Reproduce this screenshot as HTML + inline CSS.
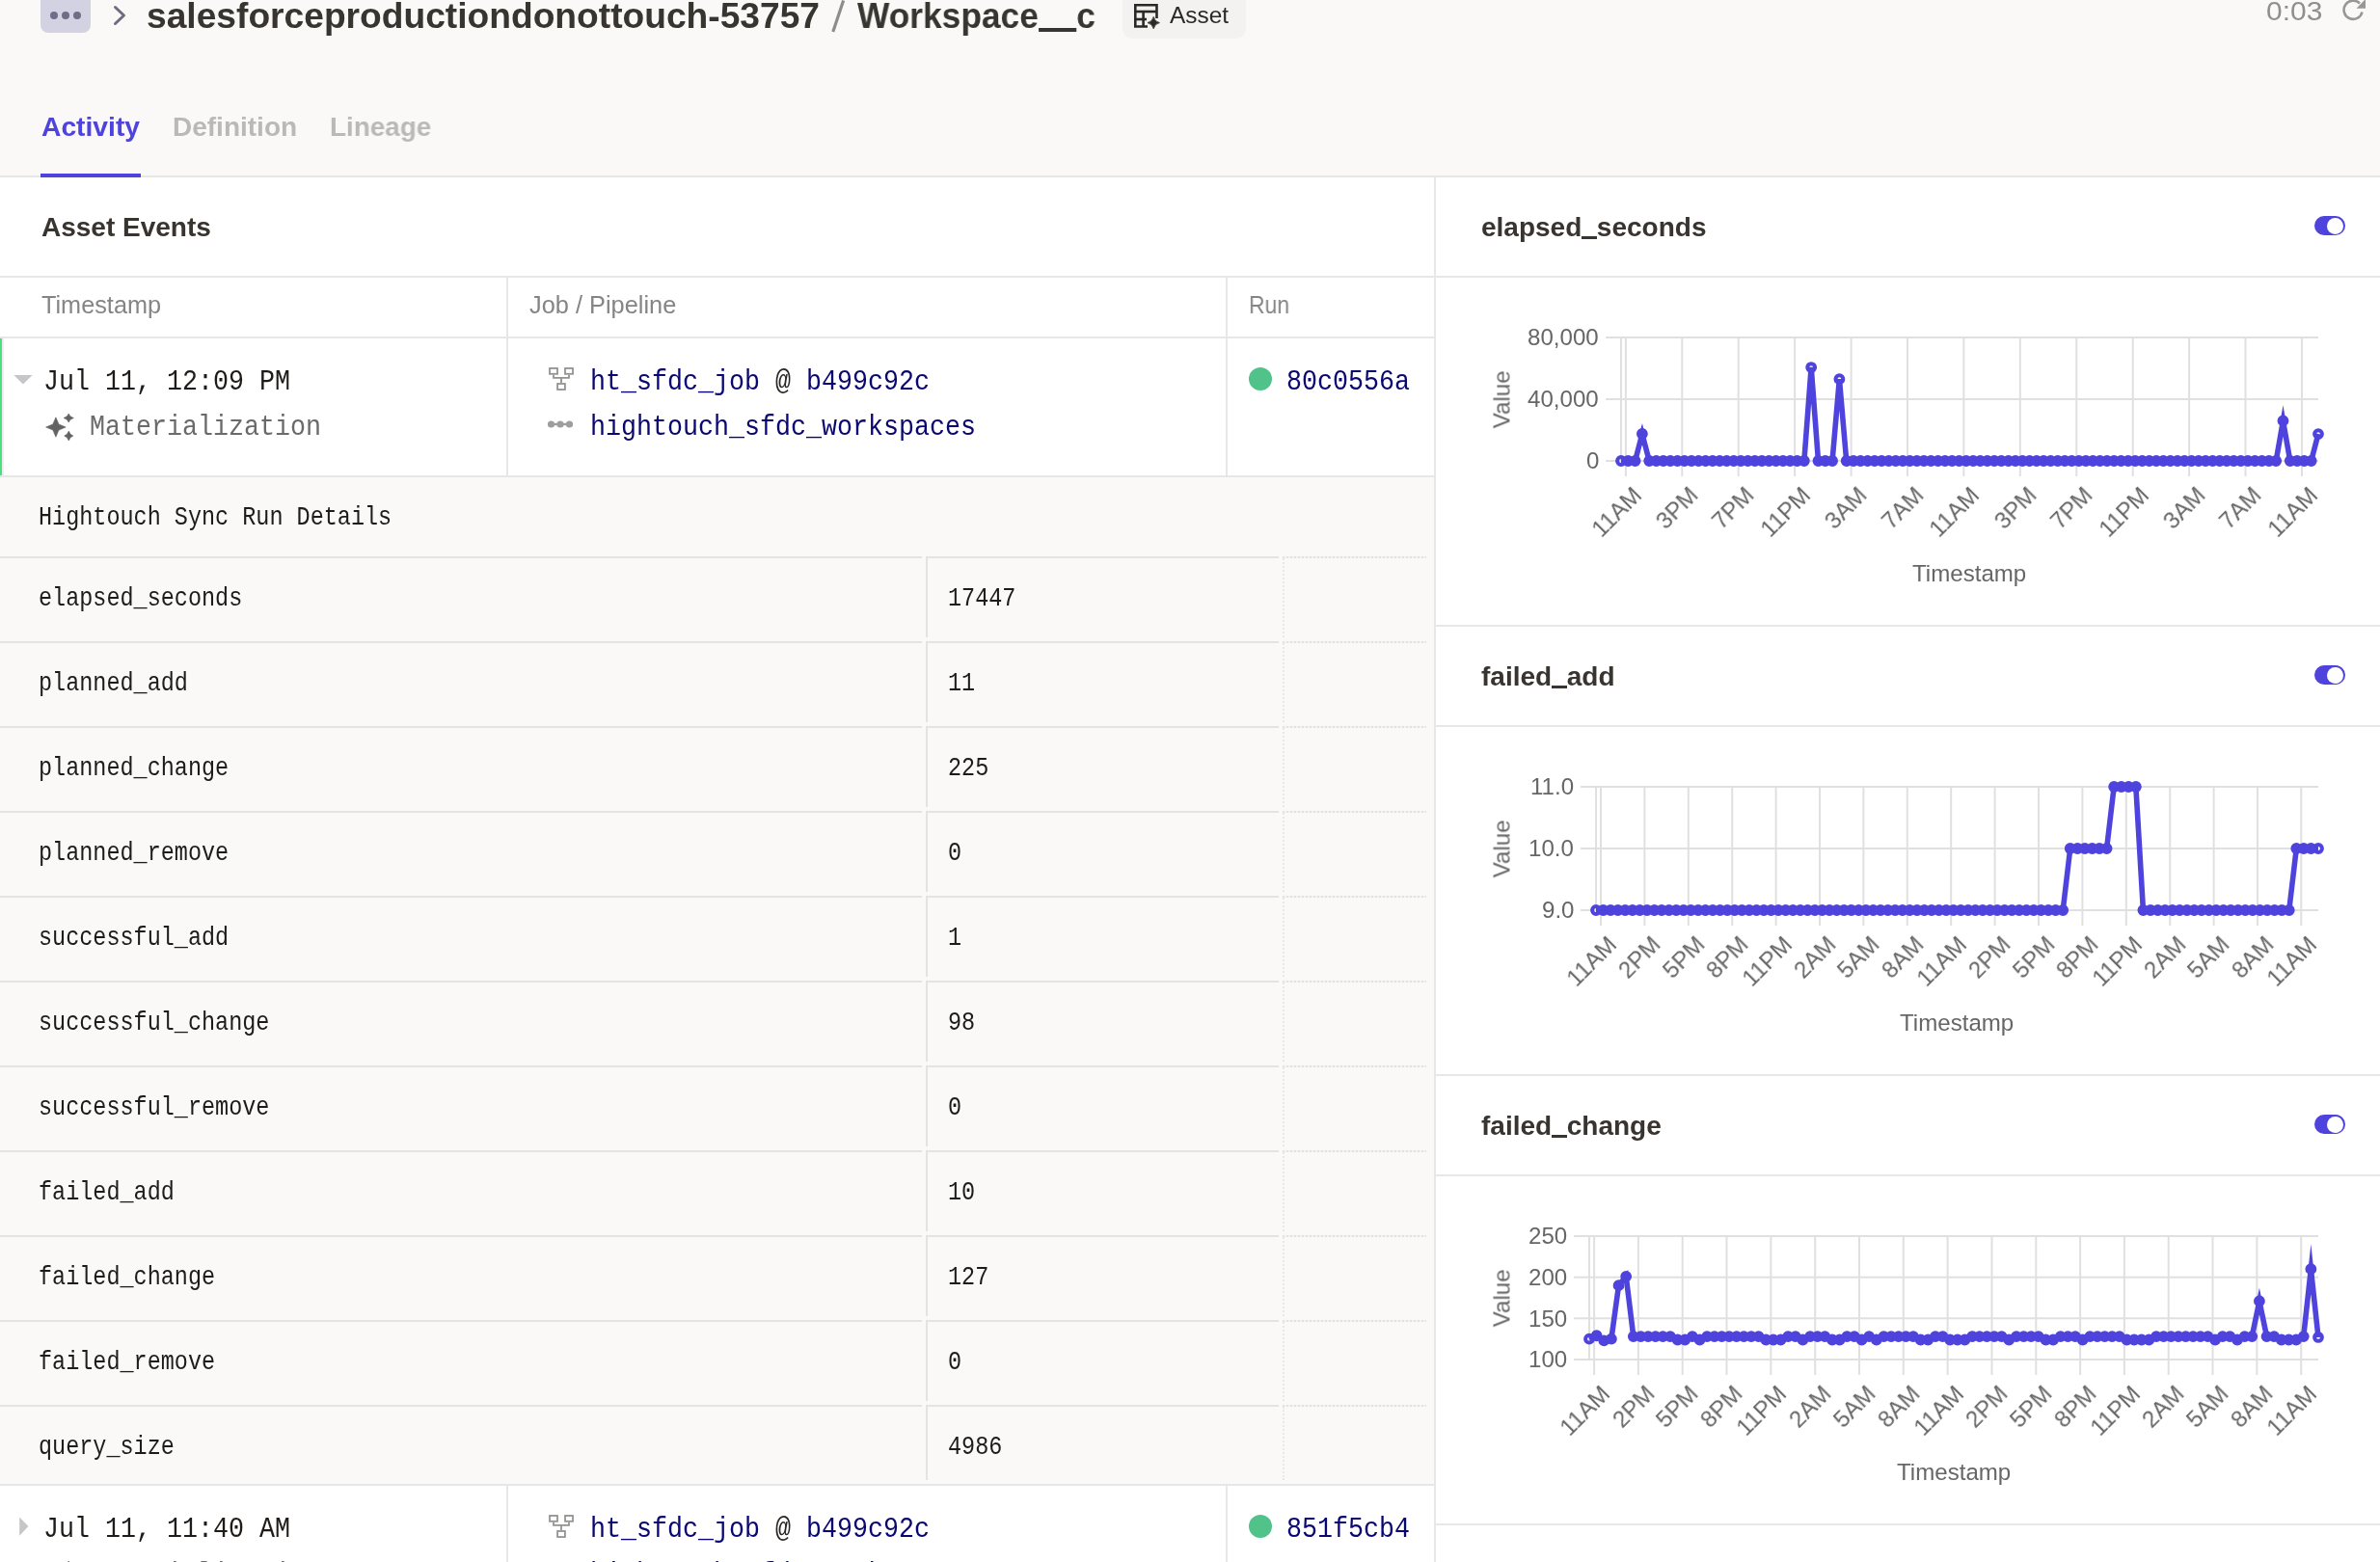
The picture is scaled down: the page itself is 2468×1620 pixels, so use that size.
<!DOCTYPE html><html><head><meta charset="utf-8"><style>
html,body{margin:0;padding:0;width:2468px;height:1620px;overflow:hidden;background:#fff;}
.t{position:absolute;white-space:pre;line-height:1;will-change:transform;}
.r{position:absolute;}
svg{position:absolute;left:0;top:0;}
</style></head><body>
<div class="r" style="left:0px;top:0px;width:2468px;height:182px;background:#FAF9F7;"></div>
<div class="r" style="left:0px;top:182px;width:2468px;height:2px;background:#E7E7E7;"></div>
<div class="r" style="left:42px;top:-8px;width:52px;height:42px;background:#D3D2E3;border-radius:8px;"></div>
<div class="r" style="left:52px;top:12px;width:8px;height:8px;background:#6F6D87;border-radius:50%;"></div>
<div class="r" style="left:64px;top:12px;width:8px;height:8px;background:#6F6D87;border-radius:50%;"></div>
<div class="r" style="left:76px;top:12px;width:8px;height:8px;background:#6F6D87;border-radius:50%;"></div>
<svg width="200" height="40" style="left:0;top:0"><path d="M119.5 7.5 L128.5 16 L119.5 24.5" fill="none" stroke="#6E6C80" stroke-width="3" stroke-linecap="round" stroke-linejoin="round"/></svg>
<div class="t" style="left:151.60px;top:-2.13px;font-family:'Liberation Sans', sans-serif;font-size:37px;font-weight:700;color:#38342F;transform:scale(1.0045,1.0000);transform-origin:0.00px 31.33px;">salesforceproductiondonottouch-53757</div>
<svg width="900" height="40" style="left:0;top:0"><path d="M874.6 0.5 L863.8 33" stroke="#8F8D8A" stroke-width="3.2" stroke-linecap="butt"/></svg>
<div class="t" style="left:889.20px;top:-2.13px;font-family:'Liberation Sans', sans-serif;font-size:37px;font-weight:700;color:#38342F;transform:scale(0.9547,1.0000);transform-origin:0.00px 31.33px;">Workspace<span style="position:relative;color:transparent">__<i style="position:absolute;left:0;right:0;top:33.48px;height:3.80px;background:currentColor;background:#38342F"></i></span>c</div>
<div class="r" style="left:1164px;top:-10px;width:128px;height:49.5px;background:#F3F2F0;border-radius:10px;"></div>
<svg width="1300" height="40" style="left:0;top:0">
<g fill="none" stroke="#2C2925" stroke-width="2.6">
<path d="M1199.5 19 V5.3 H1177.3 V27.5 H1190"/>
<path d="M1177.3 12 H1199.5"/><path d="M1177.3 20 H1189"/><path d="M1185.6 12 V27.5"/>
</g>
<path d="M1196.2 17.4 Q1197.3 22.5 1202.4 23.6 Q1197.3 24.7 1196.2 29.8 Q1195.1 24.7 1190 23.6 Q1195.1 22.5 1196.2 17.4 Z" fill="#2C2925" stroke="#2C2925" stroke-width="0.8"/>
</svg>
<div class="t" style="left:1213.00px;top:3.68px;font-family:'Liberation Sans', sans-serif;font-size:24px;font-weight:400;color:#2C2925;transform:scale(1.0167,1.0000);transform-origin:0.00px 20.32px;">Asset</div>
<div class="t" style="left:2349.70px;top:-2.01px;font-family:'Liberation Sans', sans-serif;font-size:28px;font-weight:400;color:#8F8F8F;transform:scale(1.0697,1.0000);transform-origin:0.00px 23.71px;">0:03</div>
<svg width="2468" height="40" style="left:0;top:0">
<path d="M2449.5 12.5 A9.6 9.6 0 1 1 2447 3.5" fill="none" stroke="#979797" stroke-width="2.6"/>
<path d="M2453 -1 V8.8 H2443.5 Z" fill="#979797"/>
</svg>
<div class="t" style="left:42.90px;top:118.49px;font-family:'Liberation Sans', sans-serif;font-size:28px;font-weight:700;color:#4F43DD;transform:scale(1.0084,1.0000);transform-origin:0.00px 23.71px;">Activity</div>
<div class="t" style="left:179.40px;top:118.49px;font-family:'Liberation Sans', sans-serif;font-size:28px;font-weight:700;color:#B9B9B9;transform:scale(0.9969,1.0000);transform-origin:0.00px 23.71px;">Definition</div>
<div class="t" style="left:342.40px;top:118.49px;font-family:'Liberation Sans', sans-serif;font-size:28px;font-weight:700;color:#B9B9B9;transform:scale(0.9939,1.0000);transform-origin:0.00px 23.71px;">Lineage</div>
<div class="r" style="left:42px;top:180px;width:104px;height:4px;background:#4F43DD;"></div>
<div class="r" style="left:1487px;top:184px;width:2px;height:1436px;background:#E7E7E7;"></div>
<div class="t" style="left:43.00px;top:222.19px;font-family:'Liberation Sans', sans-serif;font-size:28px;font-weight:700;color:#38342F;transform:scale(0.9972,1.0000);transform-origin:0.00px 23.71px;">Asset Events</div>
<div class="r" style="left:0px;top:286px;width:1487px;height:2px;background:#E7E7E7;"></div>
<div class="t" style="left:42.90px;top:303.53px;font-family:'Liberation Sans', sans-serif;font-size:25px;font-weight:400;color:#858585;transform:scale(1.0110,1.0000);transform-origin:0.00px 21.17px;">Timestamp</div>
<div class="t" style="left:548.80px;top:303.53px;font-family:'Liberation Sans', sans-serif;font-size:25px;font-weight:400;color:#858585;transform:scale(1.0147,1.0000);transform-origin:0.00px 21.17px;">Job / Pipeline</div>
<div class="t" style="left:1295.00px;top:303.53px;font-family:'Liberation Sans', sans-serif;font-size:25px;font-weight:400;color:#858585;transform:scale(0.9180,1.0000);transform-origin:0.00px 21.17px;">Run</div>
<div class="r" style="left:525px;top:288px;width:2px;height:61px;background:#E7E7E7;"></div>
<div class="r" style="left:1271px;top:288px;width:2px;height:61px;background:#E7E7E7;"></div>
<div class="r" style="left:0px;top:349px;width:1487px;height:2px;background:#E7E7E7;"></div>
<div class="r" style="left:0px;top:351px;width:2px;height:142px;background:#4ADE80;"></div>
<div class="r" style="left:2px;top:351px;width:1.5px;height:142px;background:#EDEDED;"></div>
<div class="r" style="left:525px;top:351px;width:2px;height:142px;background:#E7E7E7;"></div>
<div class="r" style="left:1271px;top:351px;width:2px;height:142px;background:#E7E7E7;"></div>
<svg width="60" height="60" style="left:0;top:351px"><path d="M14.3 38.0 H33.6 L24 47.6 Z" fill="#C6C6C8"/></svg>
<div class="t" style="left:44.90px;top:383.87px;font-family:'Liberation Mono', monospace;font-size:26.67px;font-weight:400;color:#1E1B18;transform:scale(1.0000,1.1200);transform-origin:0.00px 20.43px;">Jul 11, 12:09 PM</div>
<svg width="70" height="455" style="left:0;top:0"><path d="M57.90 432.80 L60.96 439.94 L68.20 443.00 L60.96 446.06 L57.90 453.20 L54.84 446.06 L47.60 443.00 L54.84 439.94 Z" fill="#636363" stroke="#636363" stroke-width="0.6" stroke-linejoin="round"/></svg>
<svg width="78" height="440" style="left:0;top:0"><path d="M71.20 429.00 L72.91 431.79 L76.30 433.50 L72.91 435.21 L71.20 438.00 L69.49 435.21 L66.10 433.50 L69.49 431.79 Z" fill="#636363" stroke="#636363" stroke-width="0.6" stroke-linejoin="round"/></svg>
<svg width="77" height="459" style="left:0;top:0"><path d="M71.30 447.10 L73.05 450.35 L75.90 452.10 L73.05 453.85 L71.30 457.10 L69.55 453.85 L66.70 452.10 L69.55 450.35 Z" fill="#636363" stroke="#636363" stroke-width="0.6" stroke-linejoin="round"/></svg>
<div class="t" style="left:92.50px;top:430.87px;font-family:'Liberation Mono', monospace;font-size:26.67px;font-weight:400;color:#6A6A6A;transform:scale(1.0000,1.1200);transform-origin:0.00px 20.43px;">Materialization</div>
<svg width="40" height="40" style="left:560px;top:381px"><g fill="none" stroke="#939391" stroke-width="1.8">
<rect x="10" y="1" width="8" height="5.8"/><rect x="26" y="1" width="8" height="5.8"/><rect x="18.1" y="17" width="7.8" height="6"/>
<path d="M14 7.7 V10.9 H30 V7.7 M22 10.9 V16.1"/></g></svg>
<div class="t" style="left:611.50px;top:383.87px;font-family:'Liberation Mono', monospace;font-size:26.67px;font-weight:400;color:#0A0870;transform:scale(1.0000,1.1200);transform-origin:0.00px 20.43px;">ht_sfdc_job <span style="color:#2A2724">@</span> b499c92c</div>
<svg width="40" height="20" style="left:560px;top:430px"><g fill="#9E9E9E">
<circle cx="11.5" cy="10" r="3.6"/><circle cx="21" cy="10" r="3.6"/><circle cx="30.5" cy="10" r="3.6"/><rect x="11.5" y="8.8" width="19" height="2.4"/></g></svg>
<div class="t" style="left:611.50px;top:430.87px;font-family:'Liberation Mono', monospace;font-size:26.67px;font-weight:400;color:#0A0870;transform:scale(1.0000,1.1200);transform-origin:0.00px 20.43px;">hightouch_sfdc_workspaces</div>
<div class="r" style="left:1295px;top:381px;width:24px;height:24px;background:#50C28A;border-radius:50%;"></div>
<div class="t" style="left:1334.20px;top:383.87px;font-family:'Liberation Mono', monospace;font-size:26.67px;font-weight:400;color:#0A0870;transform:scale(1.0000,1.1200);transform-origin:0.00px 20.43px;">80c0556a</div>
<div class="r" style="left:0px;top:493px;width:1487px;height:2px;background:#E7E7E7;"></div>
<div class="r" style="left:0px;top:495px;width:1487px;height:1044px;background:#FAF9F7;"></div>
<div class="t" style="left:40.10px;top:526.02px;font-family:'Liberation Mono', monospace;font-size:23.47px;font-weight:400;color:#1E1B18;transform:scale(1.0000,1.1500);transform-origin:0.00px 17.98px;">Hightouch Sync Run Details</div>
<div class="r" style="left:0px;top:577px;width:956px;height:2px;background:#E4E3E1;"></div>
<div class="r" style="left:960px;top:577px;width:366px;height:2px;background:#E4E3E1;"></div>
<div class="r" style="left:960px;top:579px;width:2px;height:82px;background:#E4E3E1;"></div>
<div class="r" style="left:1330px;top:577px;width:149px;height:2px;background:repeating-linear-gradient(90deg,#E2E1DF 0 2px,#F3F2F0 2px 4px);"></div>
<div class="r" style="left:1330px;top:579px;width:0px;height:82px;background:transparent;border-left:2px dotted #E9E8E6;width:0;"></div>
<div class="t" style="left:40.10px;top:610.02px;font-family:'Liberation Mono', monospace;font-size:23.47px;font-weight:400;color:#1E1B18;transform:scale(1.0000,1.1500);transform-origin:0.00px 17.98px;">elapsed_seconds</div>
<div class="t" style="left:982.50px;top:610.02px;font-family:'Liberation Mono', monospace;font-size:23.47px;font-weight:400;color:#1E1B18;transform:scale(1.0000,1.1500);transform-origin:0.00px 17.98px;">17447</div>
<div class="r" style="left:0px;top:665px;width:956px;height:2px;background:#E4E3E1;"></div>
<div class="r" style="left:960px;top:665px;width:366px;height:2px;background:#E4E3E1;"></div>
<div class="r" style="left:960px;top:667px;width:2px;height:82px;background:#E4E3E1;"></div>
<div class="r" style="left:1330px;top:665px;width:149px;height:2px;background:repeating-linear-gradient(90deg,#E2E1DF 0 2px,#F3F2F0 2px 4px);"></div>
<div class="r" style="left:1330px;top:667px;width:0px;height:82px;background:transparent;border-left:2px dotted #E9E8E6;width:0;"></div>
<div class="t" style="left:40.10px;top:698.02px;font-family:'Liberation Mono', monospace;font-size:23.47px;font-weight:400;color:#1E1B18;transform:scale(1.0000,1.1500);transform-origin:0.00px 17.98px;">planned_add</div>
<div class="t" style="left:982.50px;top:698.02px;font-family:'Liberation Mono', monospace;font-size:23.47px;font-weight:400;color:#1E1B18;transform:scale(1.0000,1.1500);transform-origin:0.00px 17.98px;">11</div>
<div class="r" style="left:0px;top:753px;width:956px;height:2px;background:#E4E3E1;"></div>
<div class="r" style="left:960px;top:753px;width:366px;height:2px;background:#E4E3E1;"></div>
<div class="r" style="left:960px;top:755px;width:2px;height:82px;background:#E4E3E1;"></div>
<div class="r" style="left:1330px;top:753px;width:149px;height:2px;background:repeating-linear-gradient(90deg,#E2E1DF 0 2px,#F3F2F0 2px 4px);"></div>
<div class="r" style="left:1330px;top:755px;width:0px;height:82px;background:transparent;border-left:2px dotted #E9E8E6;width:0;"></div>
<div class="t" style="left:40.10px;top:786.02px;font-family:'Liberation Mono', monospace;font-size:23.47px;font-weight:400;color:#1E1B18;transform:scale(1.0000,1.1500);transform-origin:0.00px 17.98px;">planned_change</div>
<div class="t" style="left:982.50px;top:786.02px;font-family:'Liberation Mono', monospace;font-size:23.47px;font-weight:400;color:#1E1B18;transform:scale(1.0000,1.1500);transform-origin:0.00px 17.98px;">225</div>
<div class="r" style="left:0px;top:841px;width:956px;height:2px;background:#E4E3E1;"></div>
<div class="r" style="left:960px;top:841px;width:366px;height:2px;background:#E4E3E1;"></div>
<div class="r" style="left:960px;top:843px;width:2px;height:82px;background:#E4E3E1;"></div>
<div class="r" style="left:1330px;top:841px;width:149px;height:2px;background:repeating-linear-gradient(90deg,#E2E1DF 0 2px,#F3F2F0 2px 4px);"></div>
<div class="r" style="left:1330px;top:843px;width:0px;height:82px;background:transparent;border-left:2px dotted #E9E8E6;width:0;"></div>
<div class="t" style="left:40.10px;top:874.02px;font-family:'Liberation Mono', monospace;font-size:23.47px;font-weight:400;color:#1E1B18;transform:scale(1.0000,1.1500);transform-origin:0.00px 17.98px;">planned_remove</div>
<div class="t" style="left:982.50px;top:874.02px;font-family:'Liberation Mono', monospace;font-size:23.47px;font-weight:400;color:#1E1B18;transform:scale(1.0000,1.1500);transform-origin:0.00px 17.98px;">0</div>
<div class="r" style="left:0px;top:929px;width:956px;height:2px;background:#E4E3E1;"></div>
<div class="r" style="left:960px;top:929px;width:366px;height:2px;background:#E4E3E1;"></div>
<div class="r" style="left:960px;top:931px;width:2px;height:82px;background:#E4E3E1;"></div>
<div class="r" style="left:1330px;top:929px;width:149px;height:2px;background:repeating-linear-gradient(90deg,#E2E1DF 0 2px,#F3F2F0 2px 4px);"></div>
<div class="r" style="left:1330px;top:931px;width:0px;height:82px;background:transparent;border-left:2px dotted #E9E8E6;width:0;"></div>
<div class="t" style="left:40.10px;top:962.02px;font-family:'Liberation Mono', monospace;font-size:23.47px;font-weight:400;color:#1E1B18;transform:scale(1.0000,1.1500);transform-origin:0.00px 17.98px;">successful_add</div>
<div class="t" style="left:982.50px;top:962.02px;font-family:'Liberation Mono', monospace;font-size:23.47px;font-weight:400;color:#1E1B18;transform:scale(1.0000,1.1500);transform-origin:0.00px 17.98px;">1</div>
<div class="r" style="left:0px;top:1017px;width:956px;height:2px;background:#E4E3E1;"></div>
<div class="r" style="left:960px;top:1017px;width:366px;height:2px;background:#E4E3E1;"></div>
<div class="r" style="left:960px;top:1019px;width:2px;height:82px;background:#E4E3E1;"></div>
<div class="r" style="left:1330px;top:1017px;width:149px;height:2px;background:repeating-linear-gradient(90deg,#E2E1DF 0 2px,#F3F2F0 2px 4px);"></div>
<div class="r" style="left:1330px;top:1019px;width:0px;height:82px;background:transparent;border-left:2px dotted #E9E8E6;width:0;"></div>
<div class="t" style="left:40.10px;top:1050.02px;font-family:'Liberation Mono', monospace;font-size:23.47px;font-weight:400;color:#1E1B18;transform:scale(1.0000,1.1500);transform-origin:0.00px 17.98px;">successful_change</div>
<div class="t" style="left:982.50px;top:1050.02px;font-family:'Liberation Mono', monospace;font-size:23.47px;font-weight:400;color:#1E1B18;transform:scale(1.0000,1.1500);transform-origin:0.00px 17.98px;">98</div>
<div class="r" style="left:0px;top:1105px;width:956px;height:2px;background:#E4E3E1;"></div>
<div class="r" style="left:960px;top:1105px;width:366px;height:2px;background:#E4E3E1;"></div>
<div class="r" style="left:960px;top:1107px;width:2px;height:82px;background:#E4E3E1;"></div>
<div class="r" style="left:1330px;top:1105px;width:149px;height:2px;background:repeating-linear-gradient(90deg,#E2E1DF 0 2px,#F3F2F0 2px 4px);"></div>
<div class="r" style="left:1330px;top:1107px;width:0px;height:82px;background:transparent;border-left:2px dotted #E9E8E6;width:0;"></div>
<div class="t" style="left:40.10px;top:1138.02px;font-family:'Liberation Mono', monospace;font-size:23.47px;font-weight:400;color:#1E1B18;transform:scale(1.0000,1.1500);transform-origin:0.00px 17.98px;">successful_remove</div>
<div class="t" style="left:982.50px;top:1138.02px;font-family:'Liberation Mono', monospace;font-size:23.47px;font-weight:400;color:#1E1B18;transform:scale(1.0000,1.1500);transform-origin:0.00px 17.98px;">0</div>
<div class="r" style="left:0px;top:1193px;width:956px;height:2px;background:#E4E3E1;"></div>
<div class="r" style="left:960px;top:1193px;width:366px;height:2px;background:#E4E3E1;"></div>
<div class="r" style="left:960px;top:1195px;width:2px;height:82px;background:#E4E3E1;"></div>
<div class="r" style="left:1330px;top:1193px;width:149px;height:2px;background:repeating-linear-gradient(90deg,#E2E1DF 0 2px,#F3F2F0 2px 4px);"></div>
<div class="r" style="left:1330px;top:1195px;width:0px;height:82px;background:transparent;border-left:2px dotted #E9E8E6;width:0;"></div>
<div class="t" style="left:40.10px;top:1226.02px;font-family:'Liberation Mono', monospace;font-size:23.47px;font-weight:400;color:#1E1B18;transform:scale(1.0000,1.1500);transform-origin:0.00px 17.98px;">failed_add</div>
<div class="t" style="left:982.50px;top:1226.02px;font-family:'Liberation Mono', monospace;font-size:23.47px;font-weight:400;color:#1E1B18;transform:scale(1.0000,1.1500);transform-origin:0.00px 17.98px;">10</div>
<div class="r" style="left:0px;top:1281px;width:956px;height:2px;background:#E4E3E1;"></div>
<div class="r" style="left:960px;top:1281px;width:366px;height:2px;background:#E4E3E1;"></div>
<div class="r" style="left:960px;top:1283px;width:2px;height:82px;background:#E4E3E1;"></div>
<div class="r" style="left:1330px;top:1281px;width:149px;height:2px;background:repeating-linear-gradient(90deg,#E2E1DF 0 2px,#F3F2F0 2px 4px);"></div>
<div class="r" style="left:1330px;top:1283px;width:0px;height:82px;background:transparent;border-left:2px dotted #E9E8E6;width:0;"></div>
<div class="t" style="left:40.10px;top:1314.02px;font-family:'Liberation Mono', monospace;font-size:23.47px;font-weight:400;color:#1E1B18;transform:scale(1.0000,1.1500);transform-origin:0.00px 17.98px;">failed_change</div>
<div class="t" style="left:982.50px;top:1314.02px;font-family:'Liberation Mono', monospace;font-size:23.47px;font-weight:400;color:#1E1B18;transform:scale(1.0000,1.1500);transform-origin:0.00px 17.98px;">127</div>
<div class="r" style="left:0px;top:1369px;width:956px;height:2px;background:#E4E3E1;"></div>
<div class="r" style="left:960px;top:1369px;width:366px;height:2px;background:#E4E3E1;"></div>
<div class="r" style="left:960px;top:1371px;width:2px;height:82px;background:#E4E3E1;"></div>
<div class="r" style="left:1330px;top:1369px;width:149px;height:2px;background:repeating-linear-gradient(90deg,#E2E1DF 0 2px,#F3F2F0 2px 4px);"></div>
<div class="r" style="left:1330px;top:1371px;width:0px;height:82px;background:transparent;border-left:2px dotted #E9E8E6;width:0;"></div>
<div class="t" style="left:40.10px;top:1402.02px;font-family:'Liberation Mono', monospace;font-size:23.47px;font-weight:400;color:#1E1B18;transform:scale(1.0000,1.1500);transform-origin:0.00px 17.98px;">failed_remove</div>
<div class="t" style="left:982.50px;top:1402.02px;font-family:'Liberation Mono', monospace;font-size:23.47px;font-weight:400;color:#1E1B18;transform:scale(1.0000,1.1500);transform-origin:0.00px 17.98px;">0</div>
<div class="r" style="left:0px;top:1457px;width:956px;height:2px;background:#E4E3E1;"></div>
<div class="r" style="left:960px;top:1457px;width:366px;height:2px;background:#E4E3E1;"></div>
<div class="r" style="left:960px;top:1459px;width:2px;height:76px;background:#E4E3E1;"></div>
<div class="r" style="left:1330px;top:1457px;width:149px;height:2px;background:repeating-linear-gradient(90deg,#E2E1DF 0 2px,#F3F2F0 2px 4px);"></div>
<div class="r" style="left:1330px;top:1459px;width:0px;height:76px;background:transparent;border-left:2px dotted #E9E8E6;width:0;"></div>
<div class="t" style="left:40.10px;top:1490.02px;font-family:'Liberation Mono', monospace;font-size:23.47px;font-weight:400;color:#1E1B18;transform:scale(1.0000,1.1500);transform-origin:0.00px 17.98px;">query_size</div>
<div class="t" style="left:982.50px;top:1490.02px;font-family:'Liberation Mono', monospace;font-size:23.47px;font-weight:400;color:#1E1B18;transform:scale(1.0000,1.1500);transform-origin:0.00px 17.98px;">4986</div>
<div class="r" style="left:0px;top:1539px;width:1487px;height:2px;background:#E7E7E7;"></div>
<div class="r" style="left:525px;top:1541px;width:2px;height:80px;background:#E7E7E7;"></div>
<div class="r" style="left:1271px;top:1541px;width:2px;height:80px;background:#E7E7E7;"></div>
<svg width="60" height="60" style="left:0;top:1541px"><path d="M20.2 32.5 V51.7 L29.4 42.1 Z" fill="#C6C6C8"/></svg>
<div class="t" style="left:44.90px;top:1573.87px;font-family:'Liberation Mono', monospace;font-size:26.67px;font-weight:400;color:#1E1B18;transform:scale(1.0000,1.1200);transform-origin:0.00px 20.43px;">Jul 11, 11:40 AM</div>
<svg width="70" height="1645" style="left:0;top:0"><path d="M57.90 1622.80 L60.96 1629.94 L68.20 1633.00 L60.96 1636.06 L57.90 1643.20 L54.84 1636.06 L47.60 1633.00 L54.84 1629.94 Z" fill="#636363" stroke="#636363" stroke-width="0.6" stroke-linejoin="round"/></svg>
<svg width="78" height="1630" style="left:0;top:0"><path d="M71.20 1619.00 L72.91 1621.79 L76.30 1623.50 L72.91 1625.21 L71.20 1628.00 L69.49 1625.21 L66.10 1623.50 L69.49 1621.79 Z" fill="#636363" stroke="#636363" stroke-width="0.6" stroke-linejoin="round"/></svg>
<svg width="77" height="1649" style="left:0;top:0"><path d="M71.30 1637.10 L73.05 1640.35 L75.90 1642.10 L73.05 1643.85 L71.30 1647.10 L69.55 1643.85 L66.70 1642.10 L69.55 1640.35 Z" fill="#636363" stroke="#636363" stroke-width="0.6" stroke-linejoin="round"/></svg>
<div class="t" style="left:92.50px;top:1620.87px;font-family:'Liberation Mono', monospace;font-size:26.67px;font-weight:400;color:#6A6A6A;transform:scale(1.0000,1.1200);transform-origin:0.00px 20.43px;">Materialization</div>
<svg width="40" height="40" style="left:560px;top:1571px"><g fill="none" stroke="#939391" stroke-width="1.8">
<rect x="10" y="1" width="8" height="5.8"/><rect x="26" y="1" width="8" height="5.8"/><rect x="18.1" y="17" width="7.8" height="6"/>
<path d="M14 7.7 V10.9 H30 V7.7 M22 10.9 V16.1"/></g></svg>
<div class="t" style="left:611.50px;top:1573.87px;font-family:'Liberation Mono', monospace;font-size:26.67px;font-weight:400;color:#0A0870;transform:scale(1.0000,1.1200);transform-origin:0.00px 20.43px;">ht_sfdc_job <span style="color:#2A2724">@</span> b499c92c</div>
<svg width="40" height="20" style="left:560px;top:1620px"><g fill="#9E9E9E">
<circle cx="11.5" cy="10" r="3.6"/><circle cx="21" cy="10" r="3.6"/><circle cx="30.5" cy="10" r="3.6"/><rect x="11.5" y="8.8" width="19" height="2.4"/></g></svg>
<div class="t" style="left:611.50px;top:1620.87px;font-family:'Liberation Mono', monospace;font-size:26.67px;font-weight:400;color:#0A0870;transform:scale(1.0000,1.1200);transform-origin:0.00px 20.43px;">hightouch_sfdc_workspaces</div>
<div class="r" style="left:1295px;top:1571px;width:24px;height:24px;background:#50C28A;border-radius:50%;"></div>
<div class="t" style="left:1334.20px;top:1573.87px;font-family:'Liberation Mono', monospace;font-size:26.67px;font-weight:400;color:#0A0870;transform:scale(1.0000,1.1200);transform-origin:0.00px 20.43px;">851f5cb4</div>
<div class="t" style="left:1535.80px;top:222.39px;font-family:'Liberation Sans', sans-serif;font-size:28px;font-weight:700;color:#38342F;">elapsed<span style="position:relative;color:transparent">_<i style="position:absolute;left:0;right:0;top:24.94px;height:3.30px;background:currentColor;background:#38342F"></i></span>seconds</div>
<div class="r" style="left:2400px;top:224px;width:32px;height:20px;background:#4F43DD;border-radius:10px;"></div>
<div class="r" style="left:2413.2px;top:225.6px;width:17px;height:17px;background:#fff;border-radius:50%;"></div>
<div class="r" style="left:1489px;top:286px;width:979px;height:2px;background:#E7E7E7;"></div>
<div class="r" style="left:1489px;top:648px;width:979px;height:2px;background:#E7E7E7;"></div>
<svg width="2468" height="1620" style="left:0;top:0">
<rect x="1665.0" y="477.0" width="739.0" height="2" fill="#E0E0E0"/>
<rect x="1665.0" y="413.0" width="739.0" height="2" fill="#E0E0E0"/>
<rect x="1665.0" y="349.0" width="739.0" height="2" fill="#E0E0E0"/>
<rect x="1680.0" y="350.0" width="2" height="128.0" fill="#E0E0E0"/>
<rect x="1684.9" y="350.0" width="2" height="144.0" fill="#E0E0E0"/>
<rect x="1743.3" y="350.0" width="2" height="144.0" fill="#E0E0E0"/>
<rect x="1801.7" y="350.0" width="2" height="144.0" fill="#E0E0E0"/>
<rect x="1860.1" y="350.0" width="2" height="144.0" fill="#E0E0E0"/>
<rect x="1918.6" y="350.0" width="2" height="144.0" fill="#E0E0E0"/>
<rect x="1977.0" y="350.0" width="2" height="144.0" fill="#E0E0E0"/>
<rect x="2035.4" y="350.0" width="2" height="144.0" fill="#E0E0E0"/>
<rect x="2093.8" y="350.0" width="2" height="144.0" fill="#E0E0E0"/>
<rect x="2152.3" y="350.0" width="2" height="144.0" fill="#E0E0E0"/>
<rect x="2210.7" y="350.0" width="2" height="144.0" fill="#E0E0E0"/>
<rect x="2269.1" y="350.0" width="2" height="144.0" fill="#E0E0E0"/>
<rect x="2327.5" y="350.0" width="2" height="144.0" fill="#E0E0E0"/>
<rect x="2386.0" y="350.0" width="2" height="144.0" fill="#E0E0E0"/>
</svg>
<div class="t" style="left:1644.50px;top:466.39px;font-family:'Liberation Sans', sans-serif;font-size:24.1px;font-weight:400;color:#666666;">0</div>
<div class="t" style="left:1584.25px;top:402.39px;font-family:'Liberation Sans', sans-serif;font-size:24.1px;font-weight:400;color:#666666;">40,000</div>
<div class="t" style="left:1584.25px;top:338.39px;font-family:'Liberation Sans', sans-serif;font-size:24.1px;font-weight:400;color:#666666;">80,000</div>
<div class="t" style="left:1642.82px;top:495.19px;font-family:'Liberation Sans', sans-serif;font-size:24.1px;color:#666666;transform:rotate(-45deg);transform-origin:61.25px 20.41px">11AM</div>
<div class="t" style="left:1712.99px;top:495.19px;font-family:'Liberation Sans', sans-serif;font-size:24.1px;color:#666666;transform:rotate(-45deg);transform-origin:49.50px 20.41px">3PM</div>
<div class="t" style="left:1771.42px;top:495.19px;font-family:'Liberation Sans', sans-serif;font-size:24.1px;color:#666666;transform:rotate(-45deg);transform-origin:49.50px 20.41px">7PM</div>
<div class="t" style="left:1818.09px;top:495.19px;font-family:'Liberation Sans', sans-serif;font-size:24.1px;color:#666666;transform:rotate(-45deg);transform-origin:61.25px 20.41px">11PM</div>
<div class="t" style="left:1888.27px;top:495.19px;font-family:'Liberation Sans', sans-serif;font-size:24.1px;color:#666666;transform:rotate(-45deg);transform-origin:49.50px 20.41px">3AM</div>
<div class="t" style="left:1946.69px;top:495.19px;font-family:'Liberation Sans', sans-serif;font-size:24.1px;color:#666666;transform:rotate(-45deg);transform-origin:49.50px 20.41px">7AM</div>
<div class="t" style="left:1993.36px;top:495.19px;font-family:'Liberation Sans', sans-serif;font-size:24.1px;color:#666666;transform:rotate(-45deg);transform-origin:61.25px 20.41px">11AM</div>
<div class="t" style="left:2063.54px;top:495.19px;font-family:'Liberation Sans', sans-serif;font-size:24.1px;color:#666666;transform:rotate(-45deg);transform-origin:49.50px 20.41px">3PM</div>
<div class="t" style="left:2121.96px;top:495.19px;font-family:'Liberation Sans', sans-serif;font-size:24.1px;color:#666666;transform:rotate(-45deg);transform-origin:49.50px 20.41px">7PM</div>
<div class="t" style="left:2168.64px;top:495.19px;font-family:'Liberation Sans', sans-serif;font-size:24.1px;color:#666666;transform:rotate(-45deg);transform-origin:61.25px 20.41px">11PM</div>
<div class="t" style="left:2238.81px;top:495.19px;font-family:'Liberation Sans', sans-serif;font-size:24.1px;color:#666666;transform:rotate(-45deg);transform-origin:49.50px 20.41px">3AM</div>
<div class="t" style="left:2297.24px;top:495.19px;font-family:'Liberation Sans', sans-serif;font-size:24.1px;color:#666666;transform:rotate(-45deg);transform-origin:49.50px 20.41px">7AM</div>
<div class="t" style="left:2343.91px;top:495.19px;font-family:'Liberation Sans', sans-serif;font-size:24.1px;color:#666666;transform:rotate(-45deg);transform-origin:61.25px 20.41px">11AM</div>
<div class="t" style="left:1535.62px;top:393.59px;font-family:'Liberation Sans', sans-serif;font-size:24.1px;color:#666666;transform:rotate(-90deg);transform-origin:29.88px 20.41px">Value</div>
<div class="t" style="left:1983.38px;top:582.59px;font-family:'Liberation Sans', sans-serif;font-size:24.1px;font-weight:400;color:#666666;">Timestamp</div>
<svg width="2468" height="1620" style="left:0;top:0">
<path d="M1681.00 478.00 L1688.30 478.00 L1695.61 478.00 L1702.91 450.00 L1710.21 478.00 L1717.52 478.00 L1724.82 478.00 L1732.12 478.00 L1739.42 478.00 L1746.73 478.00 L1754.03 478.00 L1761.33 478.00 L1768.64 478.00 L1775.94 478.00 L1783.24 478.00 L1790.55 478.00 L1797.85 478.00 L1805.15 478.00 L1812.45 478.00 L1819.76 478.00 L1827.06 478.00 L1834.36 478.00 L1841.67 478.00 L1848.97 478.00 L1856.27 478.00 L1863.58 478.00 L1870.88 478.00 L1878.18 381.04 L1885.48 478.00 L1892.79 478.00 L1900.09 478.00 L1907.39 393.20 L1914.70 478.00 L1922.00 478.00 L1929.30 478.00 L1936.61 478.00 L1943.91 478.00 L1951.21 478.00 L1958.52 478.00 L1965.82 478.00 L1973.12 478.00 L1980.42 478.00 L1987.73 478.00 L1995.03 478.00 L2002.33 478.00 L2009.64 478.00 L2016.94 478.00 L2024.24 478.00 L2031.55 478.00 L2038.85 478.00 L2046.15 478.00 L2053.45 478.00 L2060.76 478.00 L2068.06 478.00 L2075.36 478.00 L2082.67 478.00 L2089.97 478.00 L2097.27 478.00 L2104.58 478.00 L2111.88 478.00 L2119.18 478.00 L2126.48 478.00 L2133.79 478.00 L2141.09 478.00 L2148.39 478.00 L2155.70 478.00 L2163.00 478.00 L2170.30 478.00 L2177.61 478.00 L2184.91 478.00 L2192.21 478.00 L2199.52 478.00 L2206.82 478.00 L2214.12 478.00 L2221.42 478.00 L2228.73 478.00 L2236.03 478.00 L2243.33 478.00 L2250.64 478.00 L2257.94 478.00 L2265.24 478.00 L2272.55 478.00 L2279.85 478.00 L2287.15 478.00 L2294.45 478.00 L2301.76 478.00 L2309.06 478.00 L2316.36 478.00 L2323.67 478.00 L2330.97 478.00 L2338.27 478.00 L2345.58 478.00 L2352.88 478.00 L2360.18 478.00 L2367.48 436.40 L2374.79 478.00 L2382.09 478.00 L2389.39 478.00 L2396.70 478.00 L2404.00 450.08" fill="none" stroke="#4F43DD" stroke-width="5.6" stroke-linejoin="miter" stroke-miterlimit="10"/>
<circle cx="1681.00" cy="478.00" r="3.9" fill="none" stroke="#4F43DD" stroke-width="4"/>
<circle cx="1688.30" cy="478.00" r="3.9" fill="none" stroke="#4F43DD" stroke-width="4"/>
<circle cx="1695.61" cy="478.00" r="3.9" fill="none" stroke="#4F43DD" stroke-width="4"/>
<circle cx="1702.91" cy="450.00" r="3.9" fill="none" stroke="#4F43DD" stroke-width="4"/>
<circle cx="1710.21" cy="478.00" r="3.9" fill="none" stroke="#4F43DD" stroke-width="4"/>
<circle cx="1717.52" cy="478.00" r="3.9" fill="none" stroke="#4F43DD" stroke-width="4"/>
<circle cx="1724.82" cy="478.00" r="3.9" fill="none" stroke="#4F43DD" stroke-width="4"/>
<circle cx="1732.12" cy="478.00" r="3.9" fill="none" stroke="#4F43DD" stroke-width="4"/>
<circle cx="1739.42" cy="478.00" r="3.9" fill="none" stroke="#4F43DD" stroke-width="4"/>
<circle cx="1746.73" cy="478.00" r="3.9" fill="none" stroke="#4F43DD" stroke-width="4"/>
<circle cx="1754.03" cy="478.00" r="3.9" fill="none" stroke="#4F43DD" stroke-width="4"/>
<circle cx="1761.33" cy="478.00" r="3.9" fill="none" stroke="#4F43DD" stroke-width="4"/>
<circle cx="1768.64" cy="478.00" r="3.9" fill="none" stroke="#4F43DD" stroke-width="4"/>
<circle cx="1775.94" cy="478.00" r="3.9" fill="none" stroke="#4F43DD" stroke-width="4"/>
<circle cx="1783.24" cy="478.00" r="3.9" fill="none" stroke="#4F43DD" stroke-width="4"/>
<circle cx="1790.55" cy="478.00" r="3.9" fill="none" stroke="#4F43DD" stroke-width="4"/>
<circle cx="1797.85" cy="478.00" r="3.9" fill="none" stroke="#4F43DD" stroke-width="4"/>
<circle cx="1805.15" cy="478.00" r="3.9" fill="none" stroke="#4F43DD" stroke-width="4"/>
<circle cx="1812.45" cy="478.00" r="3.9" fill="none" stroke="#4F43DD" stroke-width="4"/>
<circle cx="1819.76" cy="478.00" r="3.9" fill="none" stroke="#4F43DD" stroke-width="4"/>
<circle cx="1827.06" cy="478.00" r="3.9" fill="none" stroke="#4F43DD" stroke-width="4"/>
<circle cx="1834.36" cy="478.00" r="3.9" fill="none" stroke="#4F43DD" stroke-width="4"/>
<circle cx="1841.67" cy="478.00" r="3.9" fill="none" stroke="#4F43DD" stroke-width="4"/>
<circle cx="1848.97" cy="478.00" r="3.9" fill="none" stroke="#4F43DD" stroke-width="4"/>
<circle cx="1856.27" cy="478.00" r="3.9" fill="none" stroke="#4F43DD" stroke-width="4"/>
<circle cx="1863.58" cy="478.00" r="3.9" fill="none" stroke="#4F43DD" stroke-width="4"/>
<circle cx="1870.88" cy="478.00" r="3.9" fill="none" stroke="#4F43DD" stroke-width="4"/>
<circle cx="1878.18" cy="381.04" r="3.9" fill="none" stroke="#4F43DD" stroke-width="4"/>
<circle cx="1885.48" cy="478.00" r="3.9" fill="none" stroke="#4F43DD" stroke-width="4"/>
<circle cx="1892.79" cy="478.00" r="3.9" fill="none" stroke="#4F43DD" stroke-width="4"/>
<circle cx="1900.09" cy="478.00" r="3.9" fill="none" stroke="#4F43DD" stroke-width="4"/>
<circle cx="1907.39" cy="393.20" r="3.9" fill="none" stroke="#4F43DD" stroke-width="4"/>
<circle cx="1914.70" cy="478.00" r="3.9" fill="none" stroke="#4F43DD" stroke-width="4"/>
<circle cx="1922.00" cy="478.00" r="3.9" fill="none" stroke="#4F43DD" stroke-width="4"/>
<circle cx="1929.30" cy="478.00" r="3.9" fill="none" stroke="#4F43DD" stroke-width="4"/>
<circle cx="1936.61" cy="478.00" r="3.9" fill="none" stroke="#4F43DD" stroke-width="4"/>
<circle cx="1943.91" cy="478.00" r="3.9" fill="none" stroke="#4F43DD" stroke-width="4"/>
<circle cx="1951.21" cy="478.00" r="3.9" fill="none" stroke="#4F43DD" stroke-width="4"/>
<circle cx="1958.52" cy="478.00" r="3.9" fill="none" stroke="#4F43DD" stroke-width="4"/>
<circle cx="1965.82" cy="478.00" r="3.9" fill="none" stroke="#4F43DD" stroke-width="4"/>
<circle cx="1973.12" cy="478.00" r="3.9" fill="none" stroke="#4F43DD" stroke-width="4"/>
<circle cx="1980.42" cy="478.00" r="3.9" fill="none" stroke="#4F43DD" stroke-width="4"/>
<circle cx="1987.73" cy="478.00" r="3.9" fill="none" stroke="#4F43DD" stroke-width="4"/>
<circle cx="1995.03" cy="478.00" r="3.9" fill="none" stroke="#4F43DD" stroke-width="4"/>
<circle cx="2002.33" cy="478.00" r="3.9" fill="none" stroke="#4F43DD" stroke-width="4"/>
<circle cx="2009.64" cy="478.00" r="3.9" fill="none" stroke="#4F43DD" stroke-width="4"/>
<circle cx="2016.94" cy="478.00" r="3.9" fill="none" stroke="#4F43DD" stroke-width="4"/>
<circle cx="2024.24" cy="478.00" r="3.9" fill="none" stroke="#4F43DD" stroke-width="4"/>
<circle cx="2031.55" cy="478.00" r="3.9" fill="none" stroke="#4F43DD" stroke-width="4"/>
<circle cx="2038.85" cy="478.00" r="3.9" fill="none" stroke="#4F43DD" stroke-width="4"/>
<circle cx="2046.15" cy="478.00" r="3.9" fill="none" stroke="#4F43DD" stroke-width="4"/>
<circle cx="2053.45" cy="478.00" r="3.9" fill="none" stroke="#4F43DD" stroke-width="4"/>
<circle cx="2060.76" cy="478.00" r="3.9" fill="none" stroke="#4F43DD" stroke-width="4"/>
<circle cx="2068.06" cy="478.00" r="3.9" fill="none" stroke="#4F43DD" stroke-width="4"/>
<circle cx="2075.36" cy="478.00" r="3.9" fill="none" stroke="#4F43DD" stroke-width="4"/>
<circle cx="2082.67" cy="478.00" r="3.9" fill="none" stroke="#4F43DD" stroke-width="4"/>
<circle cx="2089.97" cy="478.00" r="3.9" fill="none" stroke="#4F43DD" stroke-width="4"/>
<circle cx="2097.27" cy="478.00" r="3.9" fill="none" stroke="#4F43DD" stroke-width="4"/>
<circle cx="2104.58" cy="478.00" r="3.9" fill="none" stroke="#4F43DD" stroke-width="4"/>
<circle cx="2111.88" cy="478.00" r="3.9" fill="none" stroke="#4F43DD" stroke-width="4"/>
<circle cx="2119.18" cy="478.00" r="3.9" fill="none" stroke="#4F43DD" stroke-width="4"/>
<circle cx="2126.48" cy="478.00" r="3.9" fill="none" stroke="#4F43DD" stroke-width="4"/>
<circle cx="2133.79" cy="478.00" r="3.9" fill="none" stroke="#4F43DD" stroke-width="4"/>
<circle cx="2141.09" cy="478.00" r="3.9" fill="none" stroke="#4F43DD" stroke-width="4"/>
<circle cx="2148.39" cy="478.00" r="3.9" fill="none" stroke="#4F43DD" stroke-width="4"/>
<circle cx="2155.70" cy="478.00" r="3.9" fill="none" stroke="#4F43DD" stroke-width="4"/>
<circle cx="2163.00" cy="478.00" r="3.9" fill="none" stroke="#4F43DD" stroke-width="4"/>
<circle cx="2170.30" cy="478.00" r="3.9" fill="none" stroke="#4F43DD" stroke-width="4"/>
<circle cx="2177.61" cy="478.00" r="3.9" fill="none" stroke="#4F43DD" stroke-width="4"/>
<circle cx="2184.91" cy="478.00" r="3.9" fill="none" stroke="#4F43DD" stroke-width="4"/>
<circle cx="2192.21" cy="478.00" r="3.9" fill="none" stroke="#4F43DD" stroke-width="4"/>
<circle cx="2199.52" cy="478.00" r="3.9" fill="none" stroke="#4F43DD" stroke-width="4"/>
<circle cx="2206.82" cy="478.00" r="3.9" fill="none" stroke="#4F43DD" stroke-width="4"/>
<circle cx="2214.12" cy="478.00" r="3.9" fill="none" stroke="#4F43DD" stroke-width="4"/>
<circle cx="2221.42" cy="478.00" r="3.9" fill="none" stroke="#4F43DD" stroke-width="4"/>
<circle cx="2228.73" cy="478.00" r="3.9" fill="none" stroke="#4F43DD" stroke-width="4"/>
<circle cx="2236.03" cy="478.00" r="3.9" fill="none" stroke="#4F43DD" stroke-width="4"/>
<circle cx="2243.33" cy="478.00" r="3.9" fill="none" stroke="#4F43DD" stroke-width="4"/>
<circle cx="2250.64" cy="478.00" r="3.9" fill="none" stroke="#4F43DD" stroke-width="4"/>
<circle cx="2257.94" cy="478.00" r="3.9" fill="none" stroke="#4F43DD" stroke-width="4"/>
<circle cx="2265.24" cy="478.00" r="3.9" fill="none" stroke="#4F43DD" stroke-width="4"/>
<circle cx="2272.55" cy="478.00" r="3.9" fill="none" stroke="#4F43DD" stroke-width="4"/>
<circle cx="2279.85" cy="478.00" r="3.9" fill="none" stroke="#4F43DD" stroke-width="4"/>
<circle cx="2287.15" cy="478.00" r="3.9" fill="none" stroke="#4F43DD" stroke-width="4"/>
<circle cx="2294.45" cy="478.00" r="3.9" fill="none" stroke="#4F43DD" stroke-width="4"/>
<circle cx="2301.76" cy="478.00" r="3.9" fill="none" stroke="#4F43DD" stroke-width="4"/>
<circle cx="2309.06" cy="478.00" r="3.9" fill="none" stroke="#4F43DD" stroke-width="4"/>
<circle cx="2316.36" cy="478.00" r="3.9" fill="none" stroke="#4F43DD" stroke-width="4"/>
<circle cx="2323.67" cy="478.00" r="3.9" fill="none" stroke="#4F43DD" stroke-width="4"/>
<circle cx="2330.97" cy="478.00" r="3.9" fill="none" stroke="#4F43DD" stroke-width="4"/>
<circle cx="2338.27" cy="478.00" r="3.9" fill="none" stroke="#4F43DD" stroke-width="4"/>
<circle cx="2345.58" cy="478.00" r="3.9" fill="none" stroke="#4F43DD" stroke-width="4"/>
<circle cx="2352.88" cy="478.00" r="3.9" fill="none" stroke="#4F43DD" stroke-width="4"/>
<circle cx="2360.18" cy="478.00" r="3.9" fill="none" stroke="#4F43DD" stroke-width="4"/>
<circle cx="2367.48" cy="436.40" r="3.9" fill="none" stroke="#4F43DD" stroke-width="4"/>
<circle cx="2374.79" cy="478.00" r="3.9" fill="none" stroke="#4F43DD" stroke-width="4"/>
<circle cx="2382.09" cy="478.00" r="3.9" fill="none" stroke="#4F43DD" stroke-width="4"/>
<circle cx="2389.39" cy="478.00" r="3.9" fill="none" stroke="#4F43DD" stroke-width="4"/>
<circle cx="2396.70" cy="478.00" r="3.9" fill="none" stroke="#4F43DD" stroke-width="4"/>
<circle cx="2404.00" cy="450.08" r="3.9" fill="none" stroke="#4F43DD" stroke-width="4"/>
</svg>
<div class="t" style="left:1535.80px;top:688.39px;font-family:'Liberation Sans', sans-serif;font-size:28px;font-weight:700;color:#38342F;">failed<span style="position:relative;color:transparent">_<i style="position:absolute;left:0;right:0;top:24.94px;height:3.30px;background:currentColor;background:#38342F"></i></span>add</div>
<div class="r" style="left:2400px;top:690px;width:32px;height:20px;background:#4F43DD;border-radius:10px;"></div>
<div class="r" style="left:2413.2px;top:691.6px;width:17px;height:17px;background:#fff;border-radius:50%;"></div>
<div class="r" style="left:1489px;top:752px;width:979px;height:2px;background:#E7E7E7;"></div>
<div class="r" style="left:1489px;top:1114px;width:979px;height:2px;background:#E7E7E7;"></div>
<svg width="2468" height="1620" style="left:0;top:0">
<rect x="1639.0" y="943.0" width="765.0" height="2" fill="#E0E0E0"/>
<rect x="1639.0" y="879.0" width="765.0" height="2" fill="#E0E0E0"/>
<rect x="1639.0" y="815.0" width="765.0" height="2" fill="#E0E0E0"/>
<rect x="1654.0" y="816.0" width="2" height="128.0" fill="#E0E0E0"/>
<rect x="1659.0" y="816.0" width="2" height="144.0" fill="#E0E0E0"/>
<rect x="1704.4" y="816.0" width="2" height="144.0" fill="#E0E0E0"/>
<rect x="1749.8" y="816.0" width="2" height="144.0" fill="#E0E0E0"/>
<rect x="1795.2" y="816.0" width="2" height="144.0" fill="#E0E0E0"/>
<rect x="1840.6" y="816.0" width="2" height="144.0" fill="#E0E0E0"/>
<rect x="1886.0" y="816.0" width="2" height="144.0" fill="#E0E0E0"/>
<rect x="1931.4" y="816.0" width="2" height="144.0" fill="#E0E0E0"/>
<rect x="1976.8" y="816.0" width="2" height="144.0" fill="#E0E0E0"/>
<rect x="2022.2" y="816.0" width="2" height="144.0" fill="#E0E0E0"/>
<rect x="2067.6" y="816.0" width="2" height="144.0" fill="#E0E0E0"/>
<rect x="2113.0" y="816.0" width="2" height="144.0" fill="#E0E0E0"/>
<rect x="2158.4" y="816.0" width="2" height="144.0" fill="#E0E0E0"/>
<rect x="2203.8" y="816.0" width="2" height="144.0" fill="#E0E0E0"/>
<rect x="2249.2" y="816.0" width="2" height="144.0" fill="#E0E0E0"/>
<rect x="2294.6" y="816.0" width="2" height="144.0" fill="#E0E0E0"/>
<rect x="2340.0" y="816.0" width="2" height="144.0" fill="#E0E0E0"/>
<rect x="2385.3" y="816.0" width="2" height="144.0" fill="#E0E0E0"/>
</svg>
<div class="t" style="left:1598.50px;top:932.39px;font-family:'Liberation Sans', sans-serif;font-size:24.1px;font-weight:400;color:#666666;">9.0</div>
<div class="t" style="left:1585.00px;top:868.39px;font-family:'Liberation Sans', sans-serif;font-size:24.1px;font-weight:400;color:#666666;">10.0</div>
<div class="t" style="left:1587.00px;top:804.39px;font-family:'Liberation Sans', sans-serif;font-size:24.1px;font-weight:400;color:#666666;">11.0</div>
<div class="t" style="left:1616.99px;top:961.19px;font-family:'Liberation Sans', sans-serif;font-size:24.1px;color:#666666;transform:rotate(-45deg);transform-origin:61.25px 20.41px">11AM</div>
<div class="t" style="left:1674.14px;top:961.19px;font-family:'Liberation Sans', sans-serif;font-size:24.1px;color:#666666;transform:rotate(-45deg);transform-origin:49.50px 20.41px">2PM</div>
<div class="t" style="left:1719.53px;top:961.19px;font-family:'Liberation Sans', sans-serif;font-size:24.1px;color:#666666;transform:rotate(-45deg);transform-origin:49.50px 20.41px">5PM</div>
<div class="t" style="left:1764.93px;top:961.19px;font-family:'Liberation Sans', sans-serif;font-size:24.1px;color:#666666;transform:rotate(-45deg);transform-origin:49.50px 20.41px">8PM</div>
<div class="t" style="left:1798.57px;top:961.19px;font-family:'Liberation Sans', sans-serif;font-size:24.1px;color:#666666;transform:rotate(-45deg);transform-origin:61.25px 20.41px">11PM</div>
<div class="t" style="left:1855.71px;top:961.19px;font-family:'Liberation Sans', sans-serif;font-size:24.1px;color:#666666;transform:rotate(-45deg);transform-origin:49.50px 20.41px">2AM</div>
<div class="t" style="left:1901.11px;top:961.19px;font-family:'Liberation Sans', sans-serif;font-size:24.1px;color:#666666;transform:rotate(-45deg);transform-origin:49.50px 20.41px">5AM</div>
<div class="t" style="left:1946.50px;top:961.19px;font-family:'Liberation Sans', sans-serif;font-size:24.1px;color:#666666;transform:rotate(-45deg);transform-origin:49.50px 20.41px">8AM</div>
<div class="t" style="left:1980.15px;top:961.19px;font-family:'Liberation Sans', sans-serif;font-size:24.1px;color:#666666;transform:rotate(-45deg);transform-origin:61.25px 20.41px">11AM</div>
<div class="t" style="left:2037.29px;top:961.19px;font-family:'Liberation Sans', sans-serif;font-size:24.1px;color:#666666;transform:rotate(-45deg);transform-origin:49.50px 20.41px">2PM</div>
<div class="t" style="left:2082.68px;top:961.19px;font-family:'Liberation Sans', sans-serif;font-size:24.1px;color:#666666;transform:rotate(-45deg);transform-origin:49.50px 20.41px">5PM</div>
<div class="t" style="left:2128.08px;top:961.19px;font-family:'Liberation Sans', sans-serif;font-size:24.1px;color:#666666;transform:rotate(-45deg);transform-origin:49.50px 20.41px">8PM</div>
<div class="t" style="left:2161.72px;top:961.19px;font-family:'Liberation Sans', sans-serif;font-size:24.1px;color:#666666;transform:rotate(-45deg);transform-origin:61.25px 20.41px">11PM</div>
<div class="t" style="left:2218.86px;top:961.19px;font-family:'Liberation Sans', sans-serif;font-size:24.1px;color:#666666;transform:rotate(-45deg);transform-origin:49.50px 20.41px">2AM</div>
<div class="t" style="left:2264.26px;top:961.19px;font-family:'Liberation Sans', sans-serif;font-size:24.1px;color:#666666;transform:rotate(-45deg);transform-origin:49.50px 20.41px">5AM</div>
<div class="t" style="left:2309.65px;top:961.19px;font-family:'Liberation Sans', sans-serif;font-size:24.1px;color:#666666;transform:rotate(-45deg);transform-origin:49.50px 20.41px">8AM</div>
<div class="t" style="left:2343.30px;top:961.19px;font-family:'Liberation Sans', sans-serif;font-size:24.1px;color:#666666;transform:rotate(-45deg);transform-origin:61.25px 20.41px">11AM</div>
<div class="t" style="left:1535.62px;top:859.59px;font-family:'Liberation Sans', sans-serif;font-size:24.1px;color:#666666;transform:rotate(-90deg);transform-origin:29.88px 20.41px">Value</div>
<div class="t" style="left:1970.38px;top:1048.59px;font-family:'Liberation Sans', sans-serif;font-size:24.1px;font-weight:400;color:#666666;">Timestamp</div>
<svg width="2468" height="1620" style="left:0;top:0">
<path d="M1655.00 944.00 L1662.57 944.00 L1670.13 944.00 L1677.70 944.00 L1685.26 944.00 L1692.83 944.00 L1700.39 944.00 L1707.96 944.00 L1715.53 944.00 L1723.09 944.00 L1730.66 944.00 L1738.22 944.00 L1745.79 944.00 L1753.35 944.00 L1760.92 944.00 L1768.48 944.00 L1776.05 944.00 L1783.62 944.00 L1791.18 944.00 L1798.75 944.00 L1806.31 944.00 L1813.88 944.00 L1821.44 944.00 L1829.01 944.00 L1836.58 944.00 L1844.14 944.00 L1851.71 944.00 L1859.27 944.00 L1866.84 944.00 L1874.40 944.00 L1881.97 944.00 L1889.54 944.00 L1897.10 944.00 L1904.67 944.00 L1912.23 944.00 L1919.80 944.00 L1927.36 944.00 L1934.93 944.00 L1942.49 944.00 L1950.06 944.00 L1957.63 944.00 L1965.19 944.00 L1972.76 944.00 L1980.32 944.00 L1987.89 944.00 L1995.45 944.00 L2003.02 944.00 L2010.59 944.00 L2018.15 944.00 L2025.72 944.00 L2033.28 944.00 L2040.85 944.00 L2048.41 944.00 L2055.98 944.00 L2063.55 944.00 L2071.11 944.00 L2078.68 944.00 L2086.24 944.00 L2093.81 944.00 L2101.37 944.00 L2108.94 944.00 L2116.51 944.00 L2124.07 944.00 L2131.64 944.00 L2139.20 944.00 L2146.77 880.00 L2154.33 880.00 L2161.90 880.00 L2169.46 880.00 L2177.03 880.00 L2184.60 880.00 L2192.16 816.00 L2199.73 816.00 L2207.29 816.00 L2214.86 816.00 L2222.42 944.00 L2229.99 944.00 L2237.56 944.00 L2245.12 944.00 L2252.69 944.00 L2260.25 944.00 L2267.82 944.00 L2275.38 944.00 L2282.95 944.00 L2290.52 944.00 L2298.08 944.00 L2305.65 944.00 L2313.21 944.00 L2320.78 944.00 L2328.34 944.00 L2335.91 944.00 L2343.47 944.00 L2351.04 944.00 L2358.61 944.00 L2366.17 944.00 L2373.74 944.00 L2381.30 880.00 L2388.87 880.00 L2396.43 880.00 L2404.00 880.00" fill="none" stroke="#4F43DD" stroke-width="5.6" stroke-linejoin="miter" stroke-miterlimit="10"/>
<circle cx="1655.00" cy="944.00" r="3.9" fill="none" stroke="#4F43DD" stroke-width="4"/>
<circle cx="1662.57" cy="944.00" r="3.9" fill="none" stroke="#4F43DD" stroke-width="4"/>
<circle cx="1670.13" cy="944.00" r="3.9" fill="none" stroke="#4F43DD" stroke-width="4"/>
<circle cx="1677.70" cy="944.00" r="3.9" fill="none" stroke="#4F43DD" stroke-width="4"/>
<circle cx="1685.26" cy="944.00" r="3.9" fill="none" stroke="#4F43DD" stroke-width="4"/>
<circle cx="1692.83" cy="944.00" r="3.9" fill="none" stroke="#4F43DD" stroke-width="4"/>
<circle cx="1700.39" cy="944.00" r="3.9" fill="none" stroke="#4F43DD" stroke-width="4"/>
<circle cx="1707.96" cy="944.00" r="3.9" fill="none" stroke="#4F43DD" stroke-width="4"/>
<circle cx="1715.53" cy="944.00" r="3.9" fill="none" stroke="#4F43DD" stroke-width="4"/>
<circle cx="1723.09" cy="944.00" r="3.9" fill="none" stroke="#4F43DD" stroke-width="4"/>
<circle cx="1730.66" cy="944.00" r="3.9" fill="none" stroke="#4F43DD" stroke-width="4"/>
<circle cx="1738.22" cy="944.00" r="3.9" fill="none" stroke="#4F43DD" stroke-width="4"/>
<circle cx="1745.79" cy="944.00" r="3.9" fill="none" stroke="#4F43DD" stroke-width="4"/>
<circle cx="1753.35" cy="944.00" r="3.9" fill="none" stroke="#4F43DD" stroke-width="4"/>
<circle cx="1760.92" cy="944.00" r="3.9" fill="none" stroke="#4F43DD" stroke-width="4"/>
<circle cx="1768.48" cy="944.00" r="3.9" fill="none" stroke="#4F43DD" stroke-width="4"/>
<circle cx="1776.05" cy="944.00" r="3.9" fill="none" stroke="#4F43DD" stroke-width="4"/>
<circle cx="1783.62" cy="944.00" r="3.9" fill="none" stroke="#4F43DD" stroke-width="4"/>
<circle cx="1791.18" cy="944.00" r="3.9" fill="none" stroke="#4F43DD" stroke-width="4"/>
<circle cx="1798.75" cy="944.00" r="3.9" fill="none" stroke="#4F43DD" stroke-width="4"/>
<circle cx="1806.31" cy="944.00" r="3.9" fill="none" stroke="#4F43DD" stroke-width="4"/>
<circle cx="1813.88" cy="944.00" r="3.9" fill="none" stroke="#4F43DD" stroke-width="4"/>
<circle cx="1821.44" cy="944.00" r="3.9" fill="none" stroke="#4F43DD" stroke-width="4"/>
<circle cx="1829.01" cy="944.00" r="3.9" fill="none" stroke="#4F43DD" stroke-width="4"/>
<circle cx="1836.58" cy="944.00" r="3.9" fill="none" stroke="#4F43DD" stroke-width="4"/>
<circle cx="1844.14" cy="944.00" r="3.9" fill="none" stroke="#4F43DD" stroke-width="4"/>
<circle cx="1851.71" cy="944.00" r="3.9" fill="none" stroke="#4F43DD" stroke-width="4"/>
<circle cx="1859.27" cy="944.00" r="3.9" fill="none" stroke="#4F43DD" stroke-width="4"/>
<circle cx="1866.84" cy="944.00" r="3.9" fill="none" stroke="#4F43DD" stroke-width="4"/>
<circle cx="1874.40" cy="944.00" r="3.9" fill="none" stroke="#4F43DD" stroke-width="4"/>
<circle cx="1881.97" cy="944.00" r="3.9" fill="none" stroke="#4F43DD" stroke-width="4"/>
<circle cx="1889.54" cy="944.00" r="3.9" fill="none" stroke="#4F43DD" stroke-width="4"/>
<circle cx="1897.10" cy="944.00" r="3.9" fill="none" stroke="#4F43DD" stroke-width="4"/>
<circle cx="1904.67" cy="944.00" r="3.9" fill="none" stroke="#4F43DD" stroke-width="4"/>
<circle cx="1912.23" cy="944.00" r="3.9" fill="none" stroke="#4F43DD" stroke-width="4"/>
<circle cx="1919.80" cy="944.00" r="3.9" fill="none" stroke="#4F43DD" stroke-width="4"/>
<circle cx="1927.36" cy="944.00" r="3.9" fill="none" stroke="#4F43DD" stroke-width="4"/>
<circle cx="1934.93" cy="944.00" r="3.9" fill="none" stroke="#4F43DD" stroke-width="4"/>
<circle cx="1942.49" cy="944.00" r="3.9" fill="none" stroke="#4F43DD" stroke-width="4"/>
<circle cx="1950.06" cy="944.00" r="3.9" fill="none" stroke="#4F43DD" stroke-width="4"/>
<circle cx="1957.63" cy="944.00" r="3.9" fill="none" stroke="#4F43DD" stroke-width="4"/>
<circle cx="1965.19" cy="944.00" r="3.9" fill="none" stroke="#4F43DD" stroke-width="4"/>
<circle cx="1972.76" cy="944.00" r="3.9" fill="none" stroke="#4F43DD" stroke-width="4"/>
<circle cx="1980.32" cy="944.00" r="3.9" fill="none" stroke="#4F43DD" stroke-width="4"/>
<circle cx="1987.89" cy="944.00" r="3.9" fill="none" stroke="#4F43DD" stroke-width="4"/>
<circle cx="1995.45" cy="944.00" r="3.9" fill="none" stroke="#4F43DD" stroke-width="4"/>
<circle cx="2003.02" cy="944.00" r="3.9" fill="none" stroke="#4F43DD" stroke-width="4"/>
<circle cx="2010.59" cy="944.00" r="3.9" fill="none" stroke="#4F43DD" stroke-width="4"/>
<circle cx="2018.15" cy="944.00" r="3.9" fill="none" stroke="#4F43DD" stroke-width="4"/>
<circle cx="2025.72" cy="944.00" r="3.9" fill="none" stroke="#4F43DD" stroke-width="4"/>
<circle cx="2033.28" cy="944.00" r="3.9" fill="none" stroke="#4F43DD" stroke-width="4"/>
<circle cx="2040.85" cy="944.00" r="3.9" fill="none" stroke="#4F43DD" stroke-width="4"/>
<circle cx="2048.41" cy="944.00" r="3.9" fill="none" stroke="#4F43DD" stroke-width="4"/>
<circle cx="2055.98" cy="944.00" r="3.9" fill="none" stroke="#4F43DD" stroke-width="4"/>
<circle cx="2063.55" cy="944.00" r="3.9" fill="none" stroke="#4F43DD" stroke-width="4"/>
<circle cx="2071.11" cy="944.00" r="3.9" fill="none" stroke="#4F43DD" stroke-width="4"/>
<circle cx="2078.68" cy="944.00" r="3.9" fill="none" stroke="#4F43DD" stroke-width="4"/>
<circle cx="2086.24" cy="944.00" r="3.9" fill="none" stroke="#4F43DD" stroke-width="4"/>
<circle cx="2093.81" cy="944.00" r="3.9" fill="none" stroke="#4F43DD" stroke-width="4"/>
<circle cx="2101.37" cy="944.00" r="3.9" fill="none" stroke="#4F43DD" stroke-width="4"/>
<circle cx="2108.94" cy="944.00" r="3.9" fill="none" stroke="#4F43DD" stroke-width="4"/>
<circle cx="2116.51" cy="944.00" r="3.9" fill="none" stroke="#4F43DD" stroke-width="4"/>
<circle cx="2124.07" cy="944.00" r="3.9" fill="none" stroke="#4F43DD" stroke-width="4"/>
<circle cx="2131.64" cy="944.00" r="3.9" fill="none" stroke="#4F43DD" stroke-width="4"/>
<circle cx="2139.20" cy="944.00" r="3.9" fill="none" stroke="#4F43DD" stroke-width="4"/>
<circle cx="2146.77" cy="880.00" r="3.9" fill="none" stroke="#4F43DD" stroke-width="4"/>
<circle cx="2154.33" cy="880.00" r="3.9" fill="none" stroke="#4F43DD" stroke-width="4"/>
<circle cx="2161.90" cy="880.00" r="3.9" fill="none" stroke="#4F43DD" stroke-width="4"/>
<circle cx="2169.46" cy="880.00" r="3.9" fill="none" stroke="#4F43DD" stroke-width="4"/>
<circle cx="2177.03" cy="880.00" r="3.9" fill="none" stroke="#4F43DD" stroke-width="4"/>
<circle cx="2184.60" cy="880.00" r="3.9" fill="none" stroke="#4F43DD" stroke-width="4"/>
<circle cx="2192.16" cy="816.00" r="3.9" fill="none" stroke="#4F43DD" stroke-width="4"/>
<circle cx="2199.73" cy="816.00" r="3.9" fill="none" stroke="#4F43DD" stroke-width="4"/>
<circle cx="2207.29" cy="816.00" r="3.9" fill="none" stroke="#4F43DD" stroke-width="4"/>
<circle cx="2214.86" cy="816.00" r="3.9" fill="none" stroke="#4F43DD" stroke-width="4"/>
<circle cx="2222.42" cy="944.00" r="3.9" fill="none" stroke="#4F43DD" stroke-width="4"/>
<circle cx="2229.99" cy="944.00" r="3.9" fill="none" stroke="#4F43DD" stroke-width="4"/>
<circle cx="2237.56" cy="944.00" r="3.9" fill="none" stroke="#4F43DD" stroke-width="4"/>
<circle cx="2245.12" cy="944.00" r="3.9" fill="none" stroke="#4F43DD" stroke-width="4"/>
<circle cx="2252.69" cy="944.00" r="3.9" fill="none" stroke="#4F43DD" stroke-width="4"/>
<circle cx="2260.25" cy="944.00" r="3.9" fill="none" stroke="#4F43DD" stroke-width="4"/>
<circle cx="2267.82" cy="944.00" r="3.9" fill="none" stroke="#4F43DD" stroke-width="4"/>
<circle cx="2275.38" cy="944.00" r="3.9" fill="none" stroke="#4F43DD" stroke-width="4"/>
<circle cx="2282.95" cy="944.00" r="3.9" fill="none" stroke="#4F43DD" stroke-width="4"/>
<circle cx="2290.52" cy="944.00" r="3.9" fill="none" stroke="#4F43DD" stroke-width="4"/>
<circle cx="2298.08" cy="944.00" r="3.9" fill="none" stroke="#4F43DD" stroke-width="4"/>
<circle cx="2305.65" cy="944.00" r="3.9" fill="none" stroke="#4F43DD" stroke-width="4"/>
<circle cx="2313.21" cy="944.00" r="3.9" fill="none" stroke="#4F43DD" stroke-width="4"/>
<circle cx="2320.78" cy="944.00" r="3.9" fill="none" stroke="#4F43DD" stroke-width="4"/>
<circle cx="2328.34" cy="944.00" r="3.9" fill="none" stroke="#4F43DD" stroke-width="4"/>
<circle cx="2335.91" cy="944.00" r="3.9" fill="none" stroke="#4F43DD" stroke-width="4"/>
<circle cx="2343.47" cy="944.00" r="3.9" fill="none" stroke="#4F43DD" stroke-width="4"/>
<circle cx="2351.04" cy="944.00" r="3.9" fill="none" stroke="#4F43DD" stroke-width="4"/>
<circle cx="2358.61" cy="944.00" r="3.9" fill="none" stroke="#4F43DD" stroke-width="4"/>
<circle cx="2366.17" cy="944.00" r="3.9" fill="none" stroke="#4F43DD" stroke-width="4"/>
<circle cx="2373.74" cy="944.00" r="3.9" fill="none" stroke="#4F43DD" stroke-width="4"/>
<circle cx="2381.30" cy="880.00" r="3.9" fill="none" stroke="#4F43DD" stroke-width="4"/>
<circle cx="2388.87" cy="880.00" r="3.9" fill="none" stroke="#4F43DD" stroke-width="4"/>
<circle cx="2396.43" cy="880.00" r="3.9" fill="none" stroke="#4F43DD" stroke-width="4"/>
<circle cx="2404.00" cy="880.00" r="3.9" fill="none" stroke="#4F43DD" stroke-width="4"/>
</svg>
<div class="t" style="left:1535.80px;top:1154.39px;font-family:'Liberation Sans', sans-serif;font-size:28px;font-weight:700;color:#38342F;">failed<span style="position:relative;color:transparent">_<i style="position:absolute;left:0;right:0;top:24.94px;height:3.30px;background:currentColor;background:#38342F"></i></span>change</div>
<div class="r" style="left:2400px;top:1156px;width:32px;height:20px;background:#4F43DD;border-radius:10px;"></div>
<div class="r" style="left:2413.2px;top:1157.6px;width:17px;height:17px;background:#fff;border-radius:50%;"></div>
<div class="r" style="left:1489px;top:1218px;width:979px;height:2px;background:#E7E7E7;"></div>
<div class="r" style="left:1489px;top:1580px;width:979px;height:2px;background:#E7E7E7;"></div>
<svg width="2468" height="1620" style="left:0;top:0">
<rect x="1632.0" y="1409.0" width="772.0" height="2" fill="#E0E0E0"/>
<rect x="1632.0" y="1366.3" width="772.0" height="2" fill="#E0E0E0"/>
<rect x="1632.0" y="1323.7" width="772.0" height="2" fill="#E0E0E0"/>
<rect x="1632.0" y="1281.0" width="772.0" height="2" fill="#E0E0E0"/>
<rect x="1647.0" y="1282.0" width="2" height="128.0" fill="#E0E0E0"/>
<rect x="1652.1" y="1282.0" width="2" height="144.0" fill="#E0E0E0"/>
<rect x="1697.9" y="1282.0" width="2" height="144.0" fill="#E0E0E0"/>
<rect x="1743.7" y="1282.0" width="2" height="144.0" fill="#E0E0E0"/>
<rect x="1789.5" y="1282.0" width="2" height="144.0" fill="#E0E0E0"/>
<rect x="1835.4" y="1282.0" width="2" height="144.0" fill="#E0E0E0"/>
<rect x="1881.2" y="1282.0" width="2" height="144.0" fill="#E0E0E0"/>
<rect x="1927.0" y="1282.0" width="2" height="144.0" fill="#E0E0E0"/>
<rect x="1972.8" y="1282.0" width="2" height="144.0" fill="#E0E0E0"/>
<rect x="2018.6" y="1282.0" width="2" height="144.0" fill="#E0E0E0"/>
<rect x="2064.5" y="1282.0" width="2" height="144.0" fill="#E0E0E0"/>
<rect x="2110.3" y="1282.0" width="2" height="144.0" fill="#E0E0E0"/>
<rect x="2156.1" y="1282.0" width="2" height="144.0" fill="#E0E0E0"/>
<rect x="2201.9" y="1282.0" width="2" height="144.0" fill="#E0E0E0"/>
<rect x="2247.7" y="1282.0" width="2" height="144.0" fill="#E0E0E0"/>
<rect x="2293.5" y="1282.0" width="2" height="144.0" fill="#E0E0E0"/>
<rect x="2339.4" y="1282.0" width="2" height="144.0" fill="#E0E0E0"/>
<rect x="2385.2" y="1282.0" width="2" height="144.0" fill="#E0E0E0"/>
</svg>
<div class="t" style="left:1584.75px;top:1398.39px;font-family:'Liberation Sans', sans-serif;font-size:24.1px;font-weight:400;color:#666666;">100</div>
<div class="t" style="left:1584.75px;top:1355.73px;font-family:'Liberation Sans', sans-serif;font-size:24.1px;font-weight:400;color:#666666;">150</div>
<div class="t" style="left:1584.75px;top:1313.06px;font-family:'Liberation Sans', sans-serif;font-size:24.1px;font-weight:400;color:#666666;">200</div>
<div class="t" style="left:1584.75px;top:1270.39px;font-family:'Liberation Sans', sans-serif;font-size:24.1px;font-weight:400;color:#666666;">250</div>
<div class="t" style="left:1610.04px;top:1427.19px;font-family:'Liberation Sans', sans-serif;font-size:24.1px;color:#666666;transform:rotate(-45deg);transform-origin:61.25px 20.41px">11AM</div>
<div class="t" style="left:1667.61px;top:1427.19px;font-family:'Liberation Sans', sans-serif;font-size:24.1px;color:#666666;transform:rotate(-45deg);transform-origin:49.50px 20.41px">2PM</div>
<div class="t" style="left:1713.43px;top:1427.19px;font-family:'Liberation Sans', sans-serif;font-size:24.1px;color:#666666;transform:rotate(-45deg);transform-origin:49.50px 20.41px">5PM</div>
<div class="t" style="left:1759.25px;top:1427.19px;font-family:'Liberation Sans', sans-serif;font-size:24.1px;color:#666666;transform:rotate(-45deg);transform-origin:49.50px 20.41px">8PM</div>
<div class="t" style="left:1793.31px;top:1427.19px;font-family:'Liberation Sans', sans-serif;font-size:24.1px;color:#666666;transform:rotate(-45deg);transform-origin:61.25px 20.41px">11PM</div>
<div class="t" style="left:1850.88px;top:1427.19px;font-family:'Liberation Sans', sans-serif;font-size:24.1px;color:#666666;transform:rotate(-45deg);transform-origin:49.50px 20.41px">2AM</div>
<div class="t" style="left:1896.70px;top:1427.19px;font-family:'Liberation Sans', sans-serif;font-size:24.1px;color:#666666;transform:rotate(-45deg);transform-origin:49.50px 20.41px">5AM</div>
<div class="t" style="left:1942.52px;top:1427.19px;font-family:'Liberation Sans', sans-serif;font-size:24.1px;color:#666666;transform:rotate(-45deg);transform-origin:49.50px 20.41px">8AM</div>
<div class="t" style="left:1976.59px;top:1427.19px;font-family:'Liberation Sans', sans-serif;font-size:24.1px;color:#666666;transform:rotate(-45deg);transform-origin:61.25px 20.41px">11AM</div>
<div class="t" style="left:2034.15px;top:1427.19px;font-family:'Liberation Sans', sans-serif;font-size:24.1px;color:#666666;transform:rotate(-45deg);transform-origin:49.50px 20.41px">2PM</div>
<div class="t" style="left:2079.97px;top:1427.19px;font-family:'Liberation Sans', sans-serif;font-size:24.1px;color:#666666;transform:rotate(-45deg);transform-origin:49.50px 20.41px">5PM</div>
<div class="t" style="left:2125.79px;top:1427.19px;font-family:'Liberation Sans', sans-serif;font-size:24.1px;color:#666666;transform:rotate(-45deg);transform-origin:49.50px 20.41px">8PM</div>
<div class="t" style="left:2159.86px;top:1427.19px;font-family:'Liberation Sans', sans-serif;font-size:24.1px;color:#666666;transform:rotate(-45deg);transform-origin:61.25px 20.41px">11PM</div>
<div class="t" style="left:2217.43px;top:1427.19px;font-family:'Liberation Sans', sans-serif;font-size:24.1px;color:#666666;transform:rotate(-45deg);transform-origin:49.50px 20.41px">2AM</div>
<div class="t" style="left:2263.25px;top:1427.19px;font-family:'Liberation Sans', sans-serif;font-size:24.1px;color:#666666;transform:rotate(-45deg);transform-origin:49.50px 20.41px">5AM</div>
<div class="t" style="left:2309.06px;top:1427.19px;font-family:'Liberation Sans', sans-serif;font-size:24.1px;color:#666666;transform:rotate(-45deg);transform-origin:49.50px 20.41px">8AM</div>
<div class="t" style="left:2343.13px;top:1427.19px;font-family:'Liberation Sans', sans-serif;font-size:24.1px;color:#666666;transform:rotate(-45deg);transform-origin:61.25px 20.41px">11AM</div>
<div class="t" style="left:1535.62px;top:1325.59px;font-family:'Liberation Sans', sans-serif;font-size:24.1px;color:#666666;transform:rotate(-90deg);transform-origin:29.88px 20.41px">Value</div>
<div class="t" style="left:1966.88px;top:1514.59px;font-family:'Liberation Sans', sans-serif;font-size:24.1px;font-weight:400;color:#666666;">Timestamp</div>
<svg width="2468" height="1620" style="left:0;top:0">
<path d="M1648.00 1388.67 L1655.64 1385.25 L1663.27 1390.37 L1670.91 1388.67 L1678.55 1333.20 L1686.18 1323.81 L1693.82 1386.11 L1701.45 1386.11 L1709.09 1386.11 L1716.73 1386.11 L1724.36 1386.11 L1732.00 1386.11 L1739.64 1389.52 L1747.27 1389.52 L1754.91 1386.11 L1762.55 1389.52 L1770.18 1386.11 L1777.82 1386.11 L1785.45 1386.11 L1793.09 1386.11 L1800.73 1386.11 L1808.36 1386.11 L1816.00 1386.11 L1823.64 1386.11 L1831.27 1389.52 L1838.91 1389.52 L1846.55 1389.52 L1854.18 1386.11 L1861.82 1386.11 L1869.45 1389.52 L1877.09 1386.11 L1884.73 1386.11 L1892.36 1386.11 L1900.00 1389.52 L1907.64 1389.52 L1915.27 1386.11 L1922.91 1386.11 L1930.55 1389.52 L1938.18 1386.11 L1945.82 1389.52 L1953.45 1386.11 L1961.09 1386.11 L1968.73 1386.11 L1976.36 1386.11 L1984.00 1386.11 L1991.64 1389.52 L1999.27 1389.52 L2006.91 1386.11 L2014.55 1386.11 L2022.18 1389.52 L2029.82 1389.52 L2037.45 1389.52 L2045.09 1386.11 L2052.73 1386.11 L2060.36 1386.11 L2068.00 1386.11 L2075.64 1386.11 L2083.27 1389.52 L2090.91 1386.11 L2098.55 1386.11 L2106.18 1386.11 L2113.82 1386.11 L2121.45 1389.52 L2129.09 1389.52 L2136.73 1386.11 L2144.36 1386.11 L2152.00 1386.11 L2159.64 1389.52 L2167.27 1386.11 L2174.91 1386.11 L2182.55 1386.11 L2190.18 1386.11 L2197.82 1386.11 L2205.45 1389.52 L2213.09 1389.52 L2220.73 1389.52 L2228.36 1389.52 L2236.00 1386.11 L2243.64 1386.11 L2251.27 1386.11 L2258.91 1386.11 L2266.55 1386.11 L2274.18 1386.11 L2281.82 1386.11 L2289.45 1386.11 L2297.09 1389.52 L2304.73 1386.11 L2312.36 1386.11 L2320.00 1389.52 L2327.64 1386.11 L2335.27 1386.11 L2342.91 1349.41 L2350.55 1386.11 L2358.18 1386.11 L2365.82 1389.52 L2373.45 1389.52 L2381.09 1389.52 L2388.73 1386.11 L2396.36 1316.13 L2404.00 1386.96" fill="none" stroke="#4F43DD" stroke-width="5.6" stroke-linejoin="miter" stroke-miterlimit="10"/>
<circle cx="1648.00" cy="1388.67" r="3.9" fill="none" stroke="#4F43DD" stroke-width="4"/>
<circle cx="1655.64" cy="1385.25" r="3.9" fill="none" stroke="#4F43DD" stroke-width="4"/>
<circle cx="1663.27" cy="1390.37" r="3.9" fill="none" stroke="#4F43DD" stroke-width="4"/>
<circle cx="1670.91" cy="1388.67" r="3.9" fill="none" stroke="#4F43DD" stroke-width="4"/>
<circle cx="1678.55" cy="1333.20" r="3.9" fill="none" stroke="#4F43DD" stroke-width="4"/>
<circle cx="1686.18" cy="1323.81" r="3.9" fill="none" stroke="#4F43DD" stroke-width="4"/>
<circle cx="1693.82" cy="1386.11" r="3.9" fill="none" stroke="#4F43DD" stroke-width="4"/>
<circle cx="1701.45" cy="1386.11" r="3.9" fill="none" stroke="#4F43DD" stroke-width="4"/>
<circle cx="1709.09" cy="1386.11" r="3.9" fill="none" stroke="#4F43DD" stroke-width="4"/>
<circle cx="1716.73" cy="1386.11" r="3.9" fill="none" stroke="#4F43DD" stroke-width="4"/>
<circle cx="1724.36" cy="1386.11" r="3.9" fill="none" stroke="#4F43DD" stroke-width="4"/>
<circle cx="1732.00" cy="1386.11" r="3.9" fill="none" stroke="#4F43DD" stroke-width="4"/>
<circle cx="1739.64" cy="1389.52" r="3.9" fill="none" stroke="#4F43DD" stroke-width="4"/>
<circle cx="1747.27" cy="1389.52" r="3.9" fill="none" stroke="#4F43DD" stroke-width="4"/>
<circle cx="1754.91" cy="1386.11" r="3.9" fill="none" stroke="#4F43DD" stroke-width="4"/>
<circle cx="1762.55" cy="1389.52" r="3.9" fill="none" stroke="#4F43DD" stroke-width="4"/>
<circle cx="1770.18" cy="1386.11" r="3.9" fill="none" stroke="#4F43DD" stroke-width="4"/>
<circle cx="1777.82" cy="1386.11" r="3.9" fill="none" stroke="#4F43DD" stroke-width="4"/>
<circle cx="1785.45" cy="1386.11" r="3.9" fill="none" stroke="#4F43DD" stroke-width="4"/>
<circle cx="1793.09" cy="1386.11" r="3.9" fill="none" stroke="#4F43DD" stroke-width="4"/>
<circle cx="1800.73" cy="1386.11" r="3.9" fill="none" stroke="#4F43DD" stroke-width="4"/>
<circle cx="1808.36" cy="1386.11" r="3.9" fill="none" stroke="#4F43DD" stroke-width="4"/>
<circle cx="1816.00" cy="1386.11" r="3.9" fill="none" stroke="#4F43DD" stroke-width="4"/>
<circle cx="1823.64" cy="1386.11" r="3.9" fill="none" stroke="#4F43DD" stroke-width="4"/>
<circle cx="1831.27" cy="1389.52" r="3.9" fill="none" stroke="#4F43DD" stroke-width="4"/>
<circle cx="1838.91" cy="1389.52" r="3.9" fill="none" stroke="#4F43DD" stroke-width="4"/>
<circle cx="1846.55" cy="1389.52" r="3.9" fill="none" stroke="#4F43DD" stroke-width="4"/>
<circle cx="1854.18" cy="1386.11" r="3.9" fill="none" stroke="#4F43DD" stroke-width="4"/>
<circle cx="1861.82" cy="1386.11" r="3.9" fill="none" stroke="#4F43DD" stroke-width="4"/>
<circle cx="1869.45" cy="1389.52" r="3.9" fill="none" stroke="#4F43DD" stroke-width="4"/>
<circle cx="1877.09" cy="1386.11" r="3.9" fill="none" stroke="#4F43DD" stroke-width="4"/>
<circle cx="1884.73" cy="1386.11" r="3.9" fill="none" stroke="#4F43DD" stroke-width="4"/>
<circle cx="1892.36" cy="1386.11" r="3.9" fill="none" stroke="#4F43DD" stroke-width="4"/>
<circle cx="1900.00" cy="1389.52" r="3.9" fill="none" stroke="#4F43DD" stroke-width="4"/>
<circle cx="1907.64" cy="1389.52" r="3.9" fill="none" stroke="#4F43DD" stroke-width="4"/>
<circle cx="1915.27" cy="1386.11" r="3.9" fill="none" stroke="#4F43DD" stroke-width="4"/>
<circle cx="1922.91" cy="1386.11" r="3.9" fill="none" stroke="#4F43DD" stroke-width="4"/>
<circle cx="1930.55" cy="1389.52" r="3.9" fill="none" stroke="#4F43DD" stroke-width="4"/>
<circle cx="1938.18" cy="1386.11" r="3.9" fill="none" stroke="#4F43DD" stroke-width="4"/>
<circle cx="1945.82" cy="1389.52" r="3.9" fill="none" stroke="#4F43DD" stroke-width="4"/>
<circle cx="1953.45" cy="1386.11" r="3.9" fill="none" stroke="#4F43DD" stroke-width="4"/>
<circle cx="1961.09" cy="1386.11" r="3.9" fill="none" stroke="#4F43DD" stroke-width="4"/>
<circle cx="1968.73" cy="1386.11" r="3.9" fill="none" stroke="#4F43DD" stroke-width="4"/>
<circle cx="1976.36" cy="1386.11" r="3.9" fill="none" stroke="#4F43DD" stroke-width="4"/>
<circle cx="1984.00" cy="1386.11" r="3.9" fill="none" stroke="#4F43DD" stroke-width="4"/>
<circle cx="1991.64" cy="1389.52" r="3.9" fill="none" stroke="#4F43DD" stroke-width="4"/>
<circle cx="1999.27" cy="1389.52" r="3.9" fill="none" stroke="#4F43DD" stroke-width="4"/>
<circle cx="2006.91" cy="1386.11" r="3.9" fill="none" stroke="#4F43DD" stroke-width="4"/>
<circle cx="2014.55" cy="1386.11" r="3.9" fill="none" stroke="#4F43DD" stroke-width="4"/>
<circle cx="2022.18" cy="1389.52" r="3.9" fill="none" stroke="#4F43DD" stroke-width="4"/>
<circle cx="2029.82" cy="1389.52" r="3.9" fill="none" stroke="#4F43DD" stroke-width="4"/>
<circle cx="2037.45" cy="1389.52" r="3.9" fill="none" stroke="#4F43DD" stroke-width="4"/>
<circle cx="2045.09" cy="1386.11" r="3.9" fill="none" stroke="#4F43DD" stroke-width="4"/>
<circle cx="2052.73" cy="1386.11" r="3.9" fill="none" stroke="#4F43DD" stroke-width="4"/>
<circle cx="2060.36" cy="1386.11" r="3.9" fill="none" stroke="#4F43DD" stroke-width="4"/>
<circle cx="2068.00" cy="1386.11" r="3.9" fill="none" stroke="#4F43DD" stroke-width="4"/>
<circle cx="2075.64" cy="1386.11" r="3.9" fill="none" stroke="#4F43DD" stroke-width="4"/>
<circle cx="2083.27" cy="1389.52" r="3.9" fill="none" stroke="#4F43DD" stroke-width="4"/>
<circle cx="2090.91" cy="1386.11" r="3.9" fill="none" stroke="#4F43DD" stroke-width="4"/>
<circle cx="2098.55" cy="1386.11" r="3.9" fill="none" stroke="#4F43DD" stroke-width="4"/>
<circle cx="2106.18" cy="1386.11" r="3.9" fill="none" stroke="#4F43DD" stroke-width="4"/>
<circle cx="2113.82" cy="1386.11" r="3.9" fill="none" stroke="#4F43DD" stroke-width="4"/>
<circle cx="2121.45" cy="1389.52" r="3.9" fill="none" stroke="#4F43DD" stroke-width="4"/>
<circle cx="2129.09" cy="1389.52" r="3.9" fill="none" stroke="#4F43DD" stroke-width="4"/>
<circle cx="2136.73" cy="1386.11" r="3.9" fill="none" stroke="#4F43DD" stroke-width="4"/>
<circle cx="2144.36" cy="1386.11" r="3.9" fill="none" stroke="#4F43DD" stroke-width="4"/>
<circle cx="2152.00" cy="1386.11" r="3.9" fill="none" stroke="#4F43DD" stroke-width="4"/>
<circle cx="2159.64" cy="1389.52" r="3.9" fill="none" stroke="#4F43DD" stroke-width="4"/>
<circle cx="2167.27" cy="1386.11" r="3.9" fill="none" stroke="#4F43DD" stroke-width="4"/>
<circle cx="2174.91" cy="1386.11" r="3.9" fill="none" stroke="#4F43DD" stroke-width="4"/>
<circle cx="2182.55" cy="1386.11" r="3.9" fill="none" stroke="#4F43DD" stroke-width="4"/>
<circle cx="2190.18" cy="1386.11" r="3.9" fill="none" stroke="#4F43DD" stroke-width="4"/>
<circle cx="2197.82" cy="1386.11" r="3.9" fill="none" stroke="#4F43DD" stroke-width="4"/>
<circle cx="2205.45" cy="1389.52" r="3.9" fill="none" stroke="#4F43DD" stroke-width="4"/>
<circle cx="2213.09" cy="1389.52" r="3.9" fill="none" stroke="#4F43DD" stroke-width="4"/>
<circle cx="2220.73" cy="1389.52" r="3.9" fill="none" stroke="#4F43DD" stroke-width="4"/>
<circle cx="2228.36" cy="1389.52" r="3.9" fill="none" stroke="#4F43DD" stroke-width="4"/>
<circle cx="2236.00" cy="1386.11" r="3.9" fill="none" stroke="#4F43DD" stroke-width="4"/>
<circle cx="2243.64" cy="1386.11" r="3.9" fill="none" stroke="#4F43DD" stroke-width="4"/>
<circle cx="2251.27" cy="1386.11" r="3.9" fill="none" stroke="#4F43DD" stroke-width="4"/>
<circle cx="2258.91" cy="1386.11" r="3.9" fill="none" stroke="#4F43DD" stroke-width="4"/>
<circle cx="2266.55" cy="1386.11" r="3.9" fill="none" stroke="#4F43DD" stroke-width="4"/>
<circle cx="2274.18" cy="1386.11" r="3.9" fill="none" stroke="#4F43DD" stroke-width="4"/>
<circle cx="2281.82" cy="1386.11" r="3.9" fill="none" stroke="#4F43DD" stroke-width="4"/>
<circle cx="2289.45" cy="1386.11" r="3.9" fill="none" stroke="#4F43DD" stroke-width="4"/>
<circle cx="2297.09" cy="1389.52" r="3.9" fill="none" stroke="#4F43DD" stroke-width="4"/>
<circle cx="2304.73" cy="1386.11" r="3.9" fill="none" stroke="#4F43DD" stroke-width="4"/>
<circle cx="2312.36" cy="1386.11" r="3.9" fill="none" stroke="#4F43DD" stroke-width="4"/>
<circle cx="2320.00" cy="1389.52" r="3.9" fill="none" stroke="#4F43DD" stroke-width="4"/>
<circle cx="2327.64" cy="1386.11" r="3.9" fill="none" stroke="#4F43DD" stroke-width="4"/>
<circle cx="2335.27" cy="1386.11" r="3.9" fill="none" stroke="#4F43DD" stroke-width="4"/>
<circle cx="2342.91" cy="1349.41" r="3.9" fill="none" stroke="#4F43DD" stroke-width="4"/>
<circle cx="2350.55" cy="1386.11" r="3.9" fill="none" stroke="#4F43DD" stroke-width="4"/>
<circle cx="2358.18" cy="1386.11" r="3.9" fill="none" stroke="#4F43DD" stroke-width="4"/>
<circle cx="2365.82" cy="1389.52" r="3.9" fill="none" stroke="#4F43DD" stroke-width="4"/>
<circle cx="2373.45" cy="1389.52" r="3.9" fill="none" stroke="#4F43DD" stroke-width="4"/>
<circle cx="2381.09" cy="1389.52" r="3.9" fill="none" stroke="#4F43DD" stroke-width="4"/>
<circle cx="2388.73" cy="1386.11" r="3.9" fill="none" stroke="#4F43DD" stroke-width="4"/>
<circle cx="2396.36" cy="1316.13" r="3.9" fill="none" stroke="#4F43DD" stroke-width="4"/>
<circle cx="2404.00" cy="1386.96" r="3.9" fill="none" stroke="#4F43DD" stroke-width="4"/>
</svg>
</body></html>
